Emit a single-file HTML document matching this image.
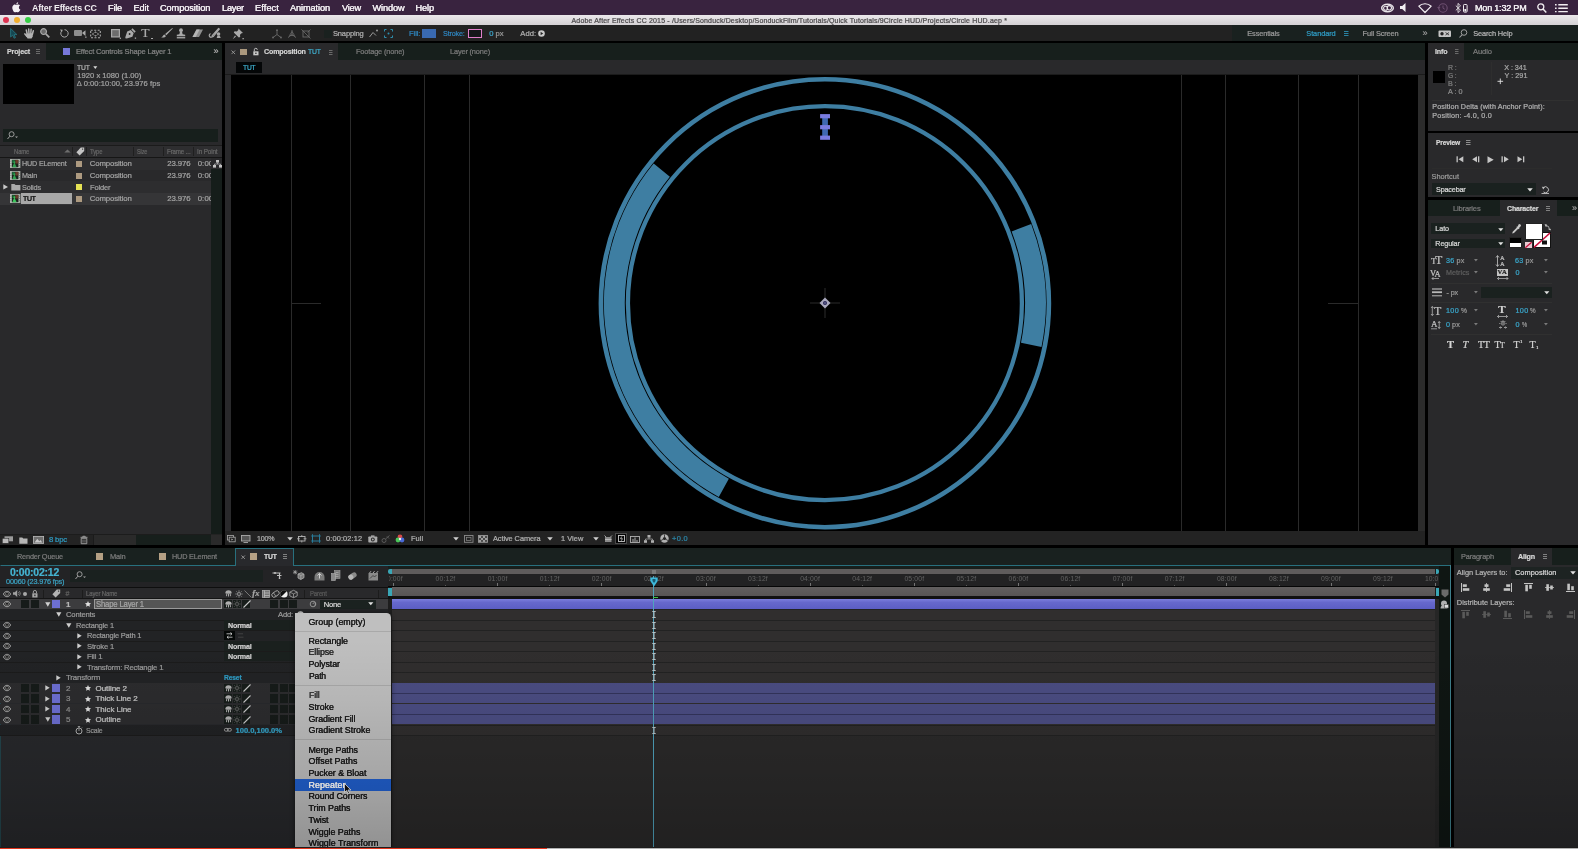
<!DOCTYPE html>
<html>
<head>
<meta charset="utf-8">
<title>After Effects</title>
<style>
html,body{margin:0;padding:0;}
body{width:1578px;height:849px;position:relative;overflow:hidden;background:#000;font-family:"Liberation Sans",sans-serif;font-size:8px;color:#a8a8a8;}
.a{position:absolute;}
.t{position:absolute;white-space:nowrap;line-height:10px;height:10px;-webkit-text-stroke:0.22px;}
svg{position:absolute;overflow:visible;}
#w{position:absolute;left:0;top:0;width:1578px;height:849px;overflow:hidden;background:#000;will-change:transform;filter:blur(0.45px);}
</style>
</head>
<body>
<div id="w">
<!-- p_top -->
<div class="a" style="left:0px;top:0px;width:1578px;height:14.7px;background:#39233f;"></div>
<svg style="left:12px;top:2px;" width="9" height="11" viewBox="0 0 9 11"><path d="M4.500000 3.200000C3.600000 2.600000 2.600000 2.500000 1.700000 3C0.400000 3.800000 0 5.500000 0.500000 7.300000C0.900000 8.800000 1.900000 10.600000 3 10.600000C3.600000 10.600000 3.900000 10.200000 4.600000 10.200000C5.300000 10.200000 5.500000 10.600000 6.200000 10.600000C7.300000 10.600000 8.200000 9 8.700000 7.800000C7.600000 7.300000 7.100000 6.300000 7.200000 5.300000C7.300000 4.400000 7.800000 3.800000 8.400000 3.400000C7.800000 2.700000 6.900000 2.500000 6.300000 2.600000C5.500000 2.700000 5 3.200000 4.500000 3.200000ZM4.500000 2.600000C4.400000 1.500000 5.200000 0.400000 6.400000 0.200000C6.500000 1.400000 5.700000 2.500000 4.500000 2.600000Z" fill="#f4f0f4" transform="scale(0.96,0.97)"/></svg>
<div class="t" style="left:32.3px;top:3px;font-size:9.4px;letter-spacing:-0.21px;transform:scaleX(0.944);transform-origin:0 50%;color:#f1edf1;font-weight:bold;-webkit-text-stroke:0;">After Effects CC</div>
<div class="t" style="left:108.0px;top:3px;font-size:9.2px;letter-spacing:-0.20px;transform:scaleX(0.999);transform-origin:0 50%;color:#f1edf1;text-shadow:0 0 0.4px #f1edf1;">File</div>
<div class="t" style="left:133.5px;top:3px;font-size:9.2px;letter-spacing:-0.09px;color:#f1edf1;text-shadow:0 0 0.4px #f1edf1;">Edit</div>
<div class="t" style="left:160.0px;top:3px;font-size:9.2px;letter-spacing:-0.06px;color:#f1edf1;text-shadow:0 0 0.4px #f1edf1;">Composition</div>
<div class="t" style="left:222.0px;top:3px;font-size:9.2px;letter-spacing:-0.20px;transform:scaleX(1.000);transform-origin:0 50%;color:#f1edf1;text-shadow:0 0 0.4px #f1edf1;">Layer</div>
<div class="t" style="left:255.0px;top:3px;font-size:9.2px;letter-spacing:0.11px;color:#f1edf1;text-shadow:0 0 0.4px #f1edf1;">Effect</div>
<div class="t" style="left:290.0px;top:3px;font-size:9.2px;letter-spacing:-0.10px;color:#f1edf1;text-shadow:0 0 0.4px #f1edf1;">Animation</div>
<div class="t" style="left:342.0px;top:3px;font-size:9.2px;letter-spacing:-0.19px;color:#f1edf1;text-shadow:0 0 0.4px #f1edf1;">View</div>
<div class="t" style="left:372.5px;top:3px;font-size:9.2px;letter-spacing:-0.12px;color:#f1edf1;text-shadow:0 0 0.4px #f1edf1;">Window</div>
<div class="t" style="left:415.5px;top:3px;font-size:9.2px;letter-spacing:-0.11px;color:#f1edf1;text-shadow:0 0 0.4px #f1edf1;">Help</div>
<div class="t" style="left:1475.0px;top:3px;font-size:9.2px;letter-spacing:-0.20px;transform:scaleX(0.981);transform-origin:0 50%;color:#f1edf1;text-shadow:0 0 0.4px #f1edf1;">Mon 1:32 PM</div>
<svg style="left:1381px;top:3px;" width="13" height="9" viewBox="0 0 13 9"><ellipse cx="6.5" cy="5" rx="5.8" ry="3.8" fill="none" stroke="#e8e4e8" stroke-width="1.5"/><circle cx="4.6" cy="5.2" r="2" fill="none" stroke="#e8e4e8" stroke-width="1.1"/><circle cx="8.3" cy="4.8" r="2.2" fill="none" stroke="#e8e4e8" stroke-width="1.1"/></svg>
<svg style="left:1400px;top:3px;" width="8" height="9" viewBox="0 0 8 9"><path d="M0 3h2.2l3.3-3v9l-3.3-3h-2.200000z" fill="#f1edf1"/></svg>
<svg style="left:1418px;top:3px;" width="14" height="10" viewBox="0 0 14 10"><path d="M0.800000 3.2c3.5-3.3 8.9-3.300000 12.400000 0l-6.200000 6.300000z" fill="none" stroke="#f1edf1" stroke-width="1.2" stroke-linejoin="round"/></svg>
<svg style="left:1437px;top:2.5px;" width="11" height="10" viewBox="0 0 11 10"><circle cx="6" cy="5" r="4.2" fill="none" stroke="#6d4f70" stroke-width="1.1"/><path d="M6 2.5v2.700000l1.800000 1" fill="none" stroke="#6d4f70" stroke-width="1"/><path d="M0 4l1.800000 2 1.700000-2z" fill="#6d4f70"/></svg>
<svg style="left:1455px;top:2.5px;" width="7" height="10" viewBox="0 0 7 10"><path d="M0.800000 2.600000l4.700000 4.600000-2.500000 2.400000v-9.200000l2.500000 2.400000-4.700000 4.600000" fill="none" stroke="#e8e4e8" stroke-width="0.9"/></svg>
<svg style="left:1463px;top:3.5px;" width="5" height="9" viewBox="0 0 5 9"><rect x="0.5" y="0.5" width="3.6" height="7.6" rx="0.8" fill="none" stroke="#f1edf1" stroke-width="1"/><rect x="1.4" y="5" width="1.8" height="2.4" fill="#f1edf1"/></svg>
<svg style="left:1537px;top:2.5px;" width="10" height="10" viewBox="0 0 10 10"><circle cx="3.8" cy="3.8" r="3" fill="none" stroke="#f1edf1" stroke-width="1.3"/><path d="M6 6l3.300000 3.400000" stroke="#f1edf1" stroke-width="1.500000"/></svg>
<svg style="left:1554.5px;top:3.5px;" width="13" height="9" viewBox="0 0 13 9"><path d="M0 0.800000h1.600000M3.300000 0.800000h9.500000M0 4.200000h1.600000M3.300000 4.200000h9.500000M0 7.600000h1.600000M3.300000 7.600000h9.500000" stroke="#f1edf1" stroke-width="1.400000"/></svg>
<div class="a" style="left:0px;top:14.7px;width:1578px;height:10.4px;background:linear-gradient(#ebe8eb,#d4d1d4);"></div>
<div class="a" style="left:2.8px;top:16.8px;width:6.4px;height:6.4px;background:#dd3350;border-radius:50%;"></div>
<div class="a" style="left:13.8px;top:16.8px;width:6.4px;height:6.4px;background:#f1ae2e;border-radius:50%;"></div>
<div class="a" style="left:24.8px;top:16.8px;width:6.4px;height:6.4px;background:#36cf45;border-radius:50%;"></div>
<div class="t" style="left:571.5px;top:16px;font-size:7px;letter-spacing:0.16px;color:#4a484a;">Adobe After Effects CC 2015 - /Users/Sonduck/Desktop/SonduckFilm/Tutorials/Quick Tutorials/9Circle HUD/Projects/Circle HUD.aep *</div>
<div class="a" style="left:0px;top:25px;width:1578px;height:15.6px;background:#222222;"></div>
<div class="a" style="left:1232px;top:25px;width:346px;height:15.6px;background:#19211f;"></div>
<svg style="left:10px;top:27.5px;" width="8" height="11" viewBox="0 0 8 11"><path d="M0.600000 0.400000v8.600000l2.100000-1.900000 1.400000 3.100000 1.400000-0.600000-1.400000-3h2.800000z" fill="#154650" stroke="#297884" stroke-width="0.8" stroke-linejoin="round"/></svg>
<svg style="left:24px;top:27.5px;" width="11" height="11" viewBox="0 0 11 11"><path d="M2.300000 5.500000L8.900000 5.300000L8.700000 8.500000L7.600000 10.500000L3.600000 10.500000L2 8Z" fill="#b4b4b4"/><path d="M3.200000 6L2.300000 2M5 5.500000L4.700000 0.900000M6.800000 5.500000L7.100000 1.300000M8.400000 6.200000L9.300000 2.800000M2.800000 8.200000L0.900000 5.900000" stroke="#b4b4b4" stroke-width="1.5" stroke-linecap="round"/></svg>
<svg style="left:40px;top:28px;" width="10" height="10" viewBox="0 0 10 10"><circle cx="3.600000" cy="3.600000" r="2.900000" fill="#6a6a6a" stroke="#a9a9a9" stroke-width="1.200000"/><path d="M5.800000 5.800000l3.500000 3.600000" stroke="#a9a9a9" stroke-width="1.700000"/></svg>
<svg style="left:60px;top:28.5px;" width="9" height="9" viewBox="0 0 9 9"><path d="M1.500000 2.200000a3.700000 3.700000 0 1 0 3-1.500000" fill="none" stroke="#a9a9a9" stroke-width="1"/><path d="M0 0.500000l2.700000 0.200000-0.800000 2.500000z" fill="#a9a9a9"/></svg>
<svg style="left:74px;top:29px;" width="13" height="9" viewBox="0 0 13 9"><rect x="0" y="1" width="8" height="6" rx="1" fill="#8d8d8d"/><path d="M8 4l3.500000-2.800000v5.800000z" fill="#a9a9a9"/><rect x="11.2" y="7.5" width="1.3" height="1.300000" fill="#a9a9a9"/></svg>
<svg style="left:90px;top:28.5px;" width="11" height="10" viewBox="0 0 11 10"><rect x="0.700000" y="1.200000" width="9.600000" height="7.600000" fill="none" stroke="#a9a9a9" stroke-width="1.100000" stroke-dasharray="2 1.500000"/><path d="M5.500000 2.200000l1.500000 1.500000h-3zM5.500000 7.800000l1.500000-1.500000h-3zM2 5l1.500000-1.500000v3zM9 5l-1.500000-1.500000v3z" fill="#a9a9a9"/></svg>
<svg style="left:111px;top:28.5px;" width="10" height="10" viewBox="0 0 10 10"><rect x="0.600000" y="0.600000" width="7.800000" height="7.300000" fill="#6d6d6d" stroke="#a9a9a9" stroke-width="1.200000"/><rect x="8.700000" y="8.600000" width="1.300000" height="1.300000" fill="#a9a9a9"/></svg>
<svg style="left:124px;top:27.5px;" width="13" height="11" viewBox="0 0 13 11"><path d="M8.500000 0.300000l3.200000 3.200000-1.200000 1.200000-3.200000-3.200000zM6.700000 2l3 3-1.300000 3.700000-5.600000 1.800000-1.500000-0.300000 0.100000-1.200000 1.800000-5.500000z" fill="#a9a9a9"/><circle cx="5.600000" cy="6" r="0.900000" fill="#222"/><rect x="10.800000" y="9.500000" width="1.300000" height="1.300000" fill="#a9a9a9"/></svg>
<div class="t" style="left:141.3px;top:28px;font-size:13.5px;color:#a9a9a9;font-family:'Liberation Serif',serif;">T</div>
<div class="a" style="left:151.3px;top:38px;width:1.3px;height:1.3px;background:#a9a9a9;"></div>
<svg style="left:161px;top:28px;" width="12" height="10" viewBox="0 0 12 10"><path d="M11.300000 0l0.500000 0.500000-6.500000 6.800000-1.200000-1.200000zM3.500000 6.500000l1.400000 1.400000c-0.500000 1.500000-2.500000 1.800000-4.700000 1.500000 1.800000-0.600000 1.600000-2.400000 3.300000-2.900000z" fill="#a9a9a9"/></svg>
<svg style="left:176px;top:27.5px;" width="10" height="11" viewBox="0 0 10 11"><circle cx="5" cy="2.200000" r="1.900000" fill="#a9a9a9"/><path d="M4 3.500000L6 3.500000L6.600000 6.200000L9.200000 6.800000L9.200000 8.300000L0.800000 8.300000L0.800000 6.800000L3.400000 6.200000Z" fill="#a9a9a9"/><rect x="0.800000" y="9.100000" width="8.400000" height="1.300000" fill="#a9a9a9"/></svg>
<svg style="left:192px;top:28.5px;" width="12" height="9" viewBox="0 0 12 9"><path d="M4.500000 0.500000h6.500000l-4 7.500000h-6.500000z" fill="#8d8d8d"/><path d="M4.500000 0.500000l-4 7.500000h3.200000l4-7.500000z" fill="#b5b5b5"/></svg>
<svg style="left:209px;top:27.5px;" width="14" height="11" viewBox="0 0 14 11"><path d="M9.500000 0.500000l0.800000 0.600000-6 7.500000-1.500000 0.500000 0.500000-1.600000zM1.500000 5.500000c-1.800000 1-1.800000 3.300000 0.500000 3.800000" fill="none" stroke="#a9a9a9" stroke-width="1.200000"/><circle cx="9.500000" cy="6" r="1.800000" fill="#a9a9a9"/><path d="M8.500000 7.500000l-0.800000 2.500000h4l-1-2.500000z" fill="#a9a9a9"/></svg>
<svg style="left:231px;top:27.5px;" width="13" height="12" viewBox="0 0 13 12"><path d="M6.500000 0.500000l4.500000 4.500000-1.500000 0.300000-1.500000 1.500000 0.200000 2.200000-1.400000 0.500000-5-5 0.800000-1.200000 2.200000 0.200000 1.500000-1.500000zM3 7.500000l1 1-3.300000 2.700000z" fill="#a9a9a9" transform="translate(1,0)"/><rect x="11.500000" y="10" width="1.300000" height="1.300000" fill="#a9a9a9"/></svg>
<svg style="left:272px;top:28.5px;" width="10" height="10" viewBox="0 0 10 10"><path d="M5 1v4.500000l-4 3M5 5.500000l4 3" fill="none" stroke="#6b6b6b" stroke-width="0.9"/><circle cx="5" cy="1.200000" r="0.900000" fill="#6b6b6b"/><circle cx="1" cy="8.500000" r="0.900000" fill="#6b6b6b"/><circle cx="9" cy="8.500000" r="0.900000" fill="#6b6b6b"/></svg>
<svg style="left:286.5px;top:28.5px;" width="10" height="10" viewBox="0 0 10 10"><path d="M5 1v4.500000l-4 3M5 5.500000l4 3" fill="none" stroke="#6b6b6b" stroke-width="0.9"/><path d="M2.500000 6.500000l2.500000-4 2.500000 4z" fill="none" stroke="#6b6b6b" stroke-width="0.8"/></svg>
<svg style="left:301px;top:28.5px;" width="10" height="10" viewBox="0 0 10 10"><rect x="2" y="2" width="6" height="6" fill="none" stroke="#6b6b6b" stroke-width="0.9"/><path d="M0.500000 0.500000l9 9M9.500000 0.500000l-3 3" stroke="#6b6b6b" stroke-width="0.8"/></svg>
<div class="a" style="left:323.5px;top:29.5px;width:8px;height:8px;background:#1a211f;"></div>
<div class="t" style="left:333.3px;top:29px;font-size:7.6px;letter-spacing:-0.17px;transform:scaleX(0.991);transform-origin:0 50%;color:#b0b0b0;">Snapping</div>
<svg style="left:368.5px;top:29px;" width="10" height="9" viewBox="0 0 10 9"><path d="M0.500000 8l3.500000-4.500000 3 3" fill="none" stroke="#999" stroke-width="1"/><circle cx="8" cy="1.500000" r="1" fill="#999"/></svg>
<svg style="left:383.5px;top:29px;" width="9" height="9" viewBox="0 0 9 9"><path d="M0.500000 2.500000v-2h2M6.500000 0.500000h2v2M8.500000 6.500000v2h-2M2.500000 8.500000h-2v-2" fill="none" stroke="#2e8fae" stroke-width="1"/><circle cx="4.500000" cy="4.500000" r="1" fill="#2e8fae"/></svg>
<div class="t" style="left:409.0px;top:29px;font-size:7.6px;letter-spacing:-0.10px;color:#2f86c0;">Fill:</div>
<div class="a" style="left:421.5px;top:28.5px;width:14.5px;height:9.5px;background:#3969b0;"></div>
<div class="t" style="left:443.3px;top:29px;font-size:7.6px;letter-spacing:-0.17px;transform:scaleX(0.947);transform-origin:0 50%;color:#2f86c0;">Stroke:</div>
<div class="a" style="left:467.5px;top:28.5px;width:14.5px;height:9.5px;background:#15171a;border:1.600000px solid #e17fcb;box-sizing:border-box;"></div>
<div class="t" style="left:489.3px;top:29px;font-size:7.6px;color:#3fa9cf;">0</div>
<div class="t" style="left:495.5px;top:29px;font-size:7.6px;letter-spacing:-0.01px;color:#9a9a9a;">px</div>
<div class="t" style="left:520.3px;top:29px;font-size:7.6px;letter-spacing:0.09px;color:#b0b0b0;">Add:</div>
<svg style="left:537.5px;top:29.8px;" width="7" height="7" viewBox="0 0 7 7"><circle cx="3.500000" cy="3.500000" r="3.300000" fill="#c9c9c9"/><path d="M2.600000 1.800000l2.600000 1.700000-2.600000 1.700000z" fill="#222"/></svg>
<div class="t" style="left:1247.3px;top:29px;font-size:7.4px;letter-spacing:-0.14px;color:#9b9b9b;">Essentials</div>
<div class="t" style="left:1306.3px;top:29px;font-size:7.4px;letter-spacing:-0.08px;color:#2f9cc4;">Standard</div>
<svg style="left:1344px;top:31px;" width="5" height="5" viewBox="0 0 5 5"><path d="M0 0.500000h4.500000M0 2.500000h4.500000M0 4.500000h4.500000" stroke="#2f9cc4" stroke-width="0.8"/></svg>
<div class="t" style="left:1362.6px;top:29px;font-size:7.4px;letter-spacing:-0.13px;color:#9b9b9b;">Full Screen</div>
<div class="t" style="left:1422.5px;top:28px;font-size:9px;color:#9b9b9b;">»</div>
<svg style="left:1438px;top:29.5px;" width="14" height="8" viewBox="0 0 14 8"><rect x="0.5" y="0.5" width="12.5" height="6.5" rx="1" fill="#c4c4c4"/><circle cx="4" cy="3.800000" r="1.700000" fill="#222"/><path d="M7.500000 2.500000l3.500000 2.500000M11 2.500000l-3.500000 2.500000" stroke="#222" stroke-width="0.8"/></svg>
<svg style="left:1458.5px;top:29px;" width="9" height="9" viewBox="0 0 9 9"><circle cx="5" cy="3.500000" r="2.800000" fill="none" stroke="#a0a0a0" stroke-width="1"/><path d="M3 5.800000l-2.500000 2.700000" stroke="#a0a0a0" stroke-width="1.100000"/></svg>
<div class="t" style="left:1473.3px;top:29px;font-size:7.4px;letter-spacing:-0.14px;color:#b5b5b5;">Search Help</div>
<div class="a" style="left:0px;top:40.6px;width:1578px;height:2.6px;background:#000;"></div>
<!-- p_project -->
<div class="a" style="left:0px;top:43px;width:222px;height:502px;background:#29292b;"></div>
<div class="a" style="left:46px;top:43px;width:176px;height:17px;background:#171f1c;"></div>
<div class="t" style="left:6.8px;top:47px;font-size:7.8px;letter-spacing:-0.17px;transform:scaleX(0.907);transform-origin:0 50%;color:#d4d4d4;font-weight:bold;">Project</div>
<svg style="left:36px;top:49px;" width="5" height="6" viewBox="0 0 5 6"><path d="M0 0.500000h4M0 2.500000h4M0 4.500000h4" stroke="#6a6a6a" stroke-width="1"/></svg>
<div class="a" style="left:63px;top:48.3px;width:6.7px;height:6.3px;background:#7678d9;"></div>
<div class="t" style="left:75.7px;top:47px;font-size:7.6px;letter-spacing:-0.17px;transform:scaleX(0.991);transform-origin:0 50%;color:#858585;">Effect Controls Shape Layer 1</div>
<div class="t" style="left:213.5px;top:46px;font-size:9px;color:#b0b0b0;">»</div>
<div class="a" style="left:3px;top:64px;width:71px;height:40px;background:#000;"></div>
<div class="t" style="left:77.3px;top:63px;font-size:7.6px;letter-spacing:-0.17px;transform:scaleX(0.890);transform-origin:0 50%;color:#b4b4b4;">TUT</div>
<svg style="left:93px;top:65.8px;" width="5" height="4" viewBox="0 0 5 4"><path d="M0.300000 0.300000h4l-2 2.800000z" fill="#d8d8d8"/></svg>
<div class="t" style="left:77.3px;top:71px;font-size:7.6px;letter-spacing:0.02px;color:#a2a2a2;">1920 x 1080 (1.00)</div>
<div class="t" style="left:76.8px;top:79px;font-size:7.6px;letter-spacing:0.05px;color:#a2a2a2;">Δ 0:00:10:00, 23.976 fps</div>
<div class="a" style="left:3px;top:129px;width:215px;height:12.5px;background:#171f1c;"></div>
<svg style="left:6.5px;top:131px;" width="12" height="9" viewBox="0 0 12 9"><circle cx="4.600000" cy="3.200000" r="2.500000" fill="none" stroke="#a5a5a5" stroke-width="0.9"/><path d="M2.900000 5.200000l-2.400000 2.800000" stroke="#a5a5a5" stroke-width="1"/><path d="M8 5.500000h3l-1.500000 1.600000z" fill="#a5a5a5"/></svg>
<div class="a" style="left:0px;top:146px;width:222px;height:11px;background:#2e2e30;"></div>
<div class="a" style="left:0px;top:145px;width:222px;height:1px;background:#1b1b1b;"></div>
<div class="a" style="left:0px;top:157px;width:222px;height:1px;background:#161616;"></div>
<div class="a" style="left:72px;top:147px;width:1px;height:9px;background:#1f1f1f;"></div>
<div class="a" style="left:86px;top:147px;width:1px;height:9px;background:#1f1f1f;"></div>
<div class="a" style="left:133px;top:147px;width:1px;height:9px;background:#1f1f1f;"></div>
<div class="a" style="left:163px;top:147px;width:1px;height:9px;background:#1f1f1f;"></div>
<div class="a" style="left:193px;top:147px;width:1px;height:9px;background:#1f1f1f;"></div>
<div class="t" style="left:13.5px;top:147px;font-size:6.8px;letter-spacing:-0.15px;transform:scaleX(0.867);transform-origin:0 50%;color:#676767;">Name</div>
<svg style="left:63.5px;top:149px;" width="7" height="4" viewBox="0 0 7 4"><path d="M0.300000 3.500000l3.200000-3 3.200000 3z" fill="#6e6e6e"/></svg>
<svg style="left:75.5px;top:147.3px;" width="9" height="9" viewBox="0 0 9 9"><path d="M4.800000 0.500000h3.400000v3.400000l-4.600000 4.600000-3.200000-3.200000z" fill="#c4c4c4"/><circle cx="6.600000" cy="2.100000" r="0.700000" fill="#2b2b2b"/></svg>
<div class="t" style="left:89.7px;top:147px;font-size:6.8px;letter-spacing:-0.15px;transform:scaleX(0.870);transform-origin:0 50%;color:#676767;">Type</div>
<div class="t" style="left:136.7px;top:147px;font-size:6.8px;letter-spacing:-0.15px;transform:scaleX(0.816);transform-origin:0 50%;color:#676767;">Size</div>
<div class="t" style="left:166.5px;top:147px;font-size:6.8px;letter-spacing:-0.15px;transform:scaleX(0.909);transform-origin:0 50%;color:#676767;">Frame ...</div>
<div class="t" style="left:197.0px;top:147px;font-size:6.8px;letter-spacing:-0.15px;transform:scaleX(0.938);transform-origin:0 50%;color:#676767;">In Point</div>
<div class="a" style="left:0px;top:158.0px;width:211px;height:11.7px;background:#2d2d2f;"></div>
<svg style="left:10px;top:159.3px;" width="10.3" height="9" viewBox="0 0 10.3 9"><rect x="0" y="0" width="10.300000" height="9" fill="#c4ccc4"/><rect x="1.800000" y="0.700000" width="6.700000" height="7.600000" fill="#1c241e"/><rect x="5.300000" y="0.900000" width="3" height="3.600000" fill="#6b3b2b"/><path d="M2.300000 8.200000L4.300000 3.200000L6.600000 8.200000Z" fill="#2fa04e"/><rect x="2.200000" y="1" width="2.600000" height="3" fill="#1d6a3a"/><circle cx="4.400000" cy="3.300000" r="1" fill="#2fa04e"/><path d="M0.900000 0.500000v8M9.400000 0.500000v8" stroke="#4a524a" stroke-width="0.700000" stroke-dasharray="0.900000 0.900000"/></svg>
<div class="t" style="left:22.0px;top:159px;font-size:7.8px;letter-spacing:-0.17px;transform:scaleX(0.919);transform-origin:0 50%;color:#a3a3a3;">HUD ELement</div>
<div class="a" style="left:76px;top:160.8px;width:6.2px;height:6.2px;background:#ad9a80;"></div>
<div class="t" style="left:89.7px;top:159px;font-size:7.8px;letter-spacing:-0.12px;color:#a3a3a3;">Composition</div>
<div class="t" style="left:167.3px;top:159px;font-size:7.8px;letter-spacing:-0.13px;color:#a3a3a3;">23.976</div>
<div class="a" style="left:197.5px;top:158.9px;width:13.3px;height:10px;overflow:hidden;"><div class="t" style="left:0.2px;top:0;font-size:7.8px;letter-spacing:0.100000px;color:#a3a3a3;">0:00</div></div>
<div class="a" style="left:0px;top:169.7px;width:211px;height:11.7px;background:#29292b;"></div>
<svg style="left:10px;top:171.0px;" width="10.3" height="9" viewBox="0 0 10.3 9"><rect x="0" y="0" width="10.300000" height="9" fill="#c4ccc4"/><rect x="1.800000" y="0.700000" width="6.700000" height="7.600000" fill="#1c241e"/><rect x="5.300000" y="0.900000" width="3" height="3.600000" fill="#6b3b2b"/><path d="M2.300000 8.200000L4.300000 3.200000L6.600000 8.200000Z" fill="#2fa04e"/><rect x="2.200000" y="1" width="2.600000" height="3" fill="#1d6a3a"/><circle cx="4.400000" cy="3.300000" r="1" fill="#2fa04e"/><path d="M0.900000 0.500000v8M9.400000 0.500000v8" stroke="#4a524a" stroke-width="0.700000" stroke-dasharray="0.900000 0.900000"/></svg>
<div class="t" style="left:22.0px;top:171px;font-size:7.8px;letter-spacing:-0.17px;transform:scaleX(0.925);transform-origin:0 50%;color:#a3a3a3;">Main</div>
<div class="a" style="left:76px;top:172.5px;width:6.2px;height:6.2px;background:#ad9a80;"></div>
<div class="t" style="left:89.7px;top:171px;font-size:7.8px;letter-spacing:-0.12px;color:#a3a3a3;">Composition</div>
<div class="t" style="left:167.3px;top:171px;font-size:7.8px;letter-spacing:-0.13px;color:#a3a3a3;">23.976</div>
<div class="a" style="left:197.5px;top:170.6px;width:13.3px;height:10px;overflow:hidden;"><div class="t" style="left:0.2px;top:0;font-size:7.8px;letter-spacing:0.100000px;color:#a3a3a3;">0:00</div></div>
<div class="a" style="left:0px;top:181.4px;width:211px;height:11.7px;background:#2d2d2f;"></div>
<svg style="left:3px;top:184.3px;" width="6" height="6" viewBox="0 0 6 6"><path d="M0.300000 0.300000l4.700000 2.600000-4.700000 2.600000z" fill="#c8c8c8"/></svg>
<svg style="left:10.5px;top:183.3px;" width="10" height="8" viewBox="0 0 10 8"><path d="M0.300000 1h3.200000l1 1h4.900000v5.600000h-9.100000z" fill="#a9a9a9"/></svg>
<div class="t" style="left:22.0px;top:183px;font-size:7.8px;letter-spacing:-0.17px;transform:scaleX(0.940);transform-origin:0 50%;color:#a3a3a3;">Solids</div>
<div class="a" style="left:76px;top:184.2px;width:6.2px;height:6.2px;background:#e5e254;"></div>
<div class="t" style="left:89.7px;top:183px;font-size:7.8px;letter-spacing:-0.17px;transform:scaleX(0.963);transform-origin:0 50%;color:#a3a3a3;">Folder</div>
<div class="a" style="left:0px;top:193.1px;width:211px;height:11.7px;background:#353537;"></div>
<div class="a" style="left:20.5px;top:193.2px;width:51.5px;height:11px;background:#a8a8a8;"></div>
<svg style="left:10px;top:194.4px;" width="10.3" height="9" viewBox="0 0 10.3 9"><rect x="0" y="0" width="10.300000" height="9" fill="#c4ccc4"/><rect x="1.800000" y="0.700000" width="6.700000" height="7.600000" fill="#1c241e"/><rect x="5.300000" y="0.900000" width="3" height="3.600000" fill="#6b3b2b"/><path d="M2.300000 8.200000L4.300000 3.200000L6.600000 8.200000Z" fill="#3cc85c"/><rect x="2.200000" y="1" width="2.600000" height="3" fill="#1a5a2c"/><circle cx="4.400000" cy="3.300000" r="1" fill="#3cc85c"/><path d="M0.900000 0.500000v8M9.400000 0.500000v8" stroke="#4a524a" stroke-width="0.700000" stroke-dasharray="0.900000 0.900000"/></svg>
<div class="t" style="left:22.6px;top:194px;font-size:7.8px;letter-spacing:-0.17px;transform:scaleX(0.881);transform-origin:0 50%;color:#181818;text-shadow:0 0 0.300000px currentColor;">TUT</div>
<div class="a" style="left:76px;top:195.9px;width:6.2px;height:6.2px;background:#ad9a80;"></div>
<div class="t" style="left:89.7px;top:194px;font-size:7.8px;letter-spacing:-0.12px;color:#a3a3a3;">Composition</div>
<div class="t" style="left:167.3px;top:194px;font-size:7.8px;letter-spacing:-0.13px;color:#a3a3a3;">23.976</div>
<div class="a" style="left:197.5px;top:194.0px;width:13.3px;height:10px;overflow:hidden;"><div class="t" style="left:0.2px;top:0;font-size:7.8px;letter-spacing:0.100000px;color:#a3a3a3;">0:00</div></div>
<svg style="left:212.5px;top:159.5px;" width="9" height="8" viewBox="0 0 9 8"><rect x="3" y="0" width="3" height="2.600000" fill="#c2c2c2"/><rect x="0" y="5" width="3" height="2.600000" fill="#c2c2c2"/><rect x="6" y="5" width="3" height="2.600000" fill="#c2c2c2"/><path d="M4.500000 2.500000v1.500000M1.500000 5v-1h6v1" fill="none" stroke="#c2c2c2" stroke-width="0.7"/></svg>
<div class="a" style="left:211px;top:169px;width:10.5px;height:365px;background:#151d1a;"></div>
<div class="a" style="left:0px;top:534px;width:222px;height:11px;background:#232323;"></div>
<div class="a" style="left:0px;top:533.5px;width:211px;height:0.8px;background:#1c1c1c;"></div>
<svg style="left:2px;top:536px;" width="12" height="8" viewBox="0 0 12 8"><rect x="2.500000" y="0.300000" width="8.500000" height="5" fill="#9a9a9a"/><rect x="0.300000" y="2.300000" width="6.500000" height="5" fill="#b9b9b9" stroke="#232323" stroke-width="0.5"/></svg>
<svg style="left:19px;top:536.5px;" width="9" height="7" viewBox="0 0 9 7"><path d="M0.300000 0.500000h3l0.900000 1h4.300000v5.200000h-8.200000z" fill="#b5b5b5"/></svg>
<svg style="left:33px;top:536px;" width="11" height="8" viewBox="0 0 11 8"><rect x="0.400000" y="0.400000" width="10.200000" height="7" fill="#6e6e6e" stroke="#b9b9b9" stroke-width="0.8"/><path d="M1.500000 6.500000l2.800000-3.800000 2 2.500000 1.200000-1.200000 1.800000 2.500000z" fill="#c9c9c9"/></svg>
<div class="t" style="left:48.5px;top:535px;font-size:7.8px;letter-spacing:-0.17px;transform:scaleX(0.988);transform-origin:0 50%;color:#2f9cc4;">8 bpc</div>
<svg style="left:80px;top:536px;" width="8" height="8" viewBox="0 0 8 8"><path d="M1.200000 2.300000h5.600000v5.400000h-5.600000zM0.500000 1.300000h7M2.800000 1.300000v-1h2.400000v1" fill="none" stroke="#a5a5a5" stroke-width="0.9"/><path d="M3 3.500000v3.200000M5 3.500000v3.200000" stroke="#a5a5a5" stroke-width="0.7"/></svg>
<div class="a" style="left:92.5px;top:535px;width:1px;height:10px;background:#1b1b1b;"></div>
<div class="a" style="left:93.5px;top:535px;width:42.5px;height:10px;background:#2a2a2a;"></div>
<div class="a" style="left:136px;top:535px;width:75px;height:10px;background:#171f1c;"></div>
<div class="a" style="left:211px;top:535px;width:11px;height:10px;background:#2a2a2a;"></div>
<!-- p_comp -->
<div class="a" style="left:225px;top:43px;width:1200px;height:502px;background:#29292b;"></div>
<div class="a" style="left:338px;top:43px;width:1087px;height:17px;background:#171f1c;"></div>
<svg style="left:231px;top:49.5px;" width="5" height="5" viewBox="0 0 5 5"><path d="M0.500000 0.500000l3.600000 3.600000M4.100000 0.500000l-3.600000 3.600000" stroke="#9a9a9a" stroke-width="0.9"/></svg>
<div class="a" style="left:240px;top:48.5px;width:7px;height:6.5px;background:#ab987e;"></div>
<svg style="left:252.5px;top:47.8px;" width="6" height="8" viewBox="0 0 6 8"><rect x="0.300000" y="3.300000" width="5.200000" height="4" fill="#c9c9c9"/><path d="M1.300000 3.300000v-1.500000a1.500000 1.500000 0 0 1 3 0" fill="none" stroke="#c9c9c9" stroke-width="0.9"/><rect x="2.300000" y="4.600000" width="1.200000" height="1.400000" fill="#262626"/></svg>
<div class="t" style="left:264.0px;top:47px;font-size:7.8px;letter-spacing:-0.17px;transform:scaleX(0.913);transform-origin:0 50%;color:#d4d4d4;font-weight:bold;">Composition</div>
<div class="t" style="left:307.5px;top:47px;font-size:7.8px;letter-spacing:-0.17px;transform:scaleX(0.874);transform-origin:0 50%;color:#3fb2d3;">TUT</div>
<svg style="left:329px;top:49.5px;" width="4" height="6" viewBox="0 0 4 6"><path d="M0 0.500000h3.500000M0 2.500000h3.500000M0 4.500000h3.500000" stroke="#6a6a6a" stroke-width="1"/></svg>
<div class="t" style="left:355.5px;top:47px;font-size:7.6px;letter-spacing:-0.17px;transform:scaleX(0.977);transform-origin:0 50%;color:#7c7c7c;">Footage (none)</div>
<div class="t" style="left:450.0px;top:47px;font-size:7.6px;letter-spacing:-0.17px;transform:scaleX(0.974);transform-origin:0 50%;color:#7c7c7c;">Layer (none)</div>
<div class="a" style="left:236px;top:62.4px;width:25.6px;height:10.2px;background:#040607;"></div>
<div class="t" style="left:242.5px;top:63px;font-size:7.6px;letter-spacing:-0.17px;transform:scaleX(0.876);transform-origin:0 50%;color:#3fb2d3;">TUT</div>
<div class="a" style="left:225px;top:74px;width:1200px;height:1px;background:#1b1b1b;"></div>
<div class="a" style="left:231px;top:75px;width:1187px;height:455.7px;background:#000;"></div>
<div class="a" style="left:1418px;top:75px;width:7px;height:456px;background:#2b2b2b;"></div>
<div class="a" style="left:291px;top:75px;width:1px;height:455.7px;background:#2a2a2a;"></div>
<div class="a" style="left:350.2px;top:75px;width:1px;height:455.7px;background:#2a2a2a;"></div>
<div class="a" style="left:424.3px;top:75px;width:1px;height:455.7px;background:#2a2a2a;"></div>
<div class="a" style="left:469px;top:75px;width:1px;height:455.7px;background:#2a2a2a;"></div>
<div class="a" style="left:1180.6px;top:75px;width:1px;height:455.7px;background:#2a2a2a;"></div>
<div class="a" style="left:1225.3px;top:75px;width:1px;height:455.7px;background:#2a2a2a;"></div>
<div class="a" style="left:1298.3px;top:75px;width:1px;height:455.7px;background:#2a2a2a;"></div>
<div class="a" style="left:1358.2px;top:75px;width:1px;height:455.7px;background:#2a2a2a;"></div>
<div class="a" style="left:291px;top:302.6px;width:30px;height:1px;background:#2a2a2a;"></div>
<div class="a" style="left:1328px;top:302.6px;width:31px;height:1px;background:#2a2a2a;"></div>
<svg style="left:231px;top:75px;" width="1187" height="456" viewBox="0 0 1187 456"><circle cx="593.9" cy="228.2" r="224" fill="none" stroke="#3e7ea2" stroke-width="4.6"/><circle cx="593.9" cy="228.2" r="197" fill="none" stroke="#3e7ea2" stroke-width="4.3"/><path d="M430.77 95.16A210.5 210.5 0 0 0 492.81 412.84" fill="none" stroke="#3e7ea2" stroke-width="20.9"/><path d="M790.42 152.76A210.5 210.5 0 0 1 800.25 269.81" fill="none" stroke="#3e7ea2" stroke-width="20.9"/><path d="M579 228h30M594 213v30" stroke="#1c1c1c" stroke-width="1.6"/><path d="M588.5 228l5.500000-5.500000 5.500000 5.500000-5.500000 5.500000z" fill="#a9a8bd"/><circle cx="594" cy="228" r="2" fill="#2a2858"/><circle cx="594" cy="228" r="0.700000" fill="#9a98c8"/><rect x="591.2" y="41" width="5.700000" height="22" fill="#3f68b0"/><rect x="589.1" y="39.099999999999994" width="9.900000" height="4.200000" fill="#7a7ce0"/><rect x="589.1" y="50.099999999999994" width="9.900000" height="4.200000" fill="#7a7ce0"/><rect x="589.1" y="60.599999999999994" width="9.900000" height="4.200000" fill="#7a7ce0"/></svg>
<div class="a" style="left:225px;top:530.7px;width:1200px;height:14.3px;background:#232323;"></div>
<svg style="left:227px;top:534.5px;" width="9" height="8" viewBox="0 0 9 8"><rect x="0.400000" y="0.400000" width="6" height="4.600000" fill="none" stroke="#a9a9a9" stroke-width="0.8"/><rect x="2.200000" y="2.200000" width="6" height="4.600000" fill="#232323" stroke="#a9a9a9" stroke-width="0.8"/><path d="M4.300000 3.500000l2 1-2 1z" fill="#a9a9a9"/></svg>
<svg style="left:241px;top:534.5px;" width="10" height="8" viewBox="0 0 10 8"><rect x="0.500000" y="0.500000" width="8.500000" height="5.500000" fill="#555" stroke="#a9a9a9" stroke-width="0.9"/><path d="M2.500000 7.500000h4.500000" stroke="#a9a9a9" stroke-width="0.9"/></svg>
<div class="t" style="left:257.0px;top:534px;font-size:7.4px;letter-spacing:-0.16px;transform:scaleX(0.958);transform-origin:0 50%;color:#b0b0b0;">100%</div>
<svg style="left:286.5px;top:536.5px;" width="6" height="4" viewBox="0 0 6 4"><path d="M0.200000 0.300000h5.600000l-2.800000 3.300000z" fill="#d0d0d0"/></svg>
<svg style="left:297px;top:534.5px;" width="10" height="8" viewBox="0 0 10 8"><rect x="1.500000" y="1.500000" width="6.500000" height="4.500000" fill="none" stroke="#b5b5b5" stroke-width="0.9"/><path d="M0 3.800000h3M6.500000 3.800000h3M4.800000 0v2M4.800000 5.500000v2" stroke="#b5b5b5" stroke-width="0.8"/></svg>
<svg style="left:311px;top:534px;" width="10" height="9" viewBox="0 0 10 9"><rect x="1.500000" y="2" width="7" height="5" fill="none" stroke="#2a86a8" stroke-width="0.9"/><path d="M1.500000 0v2h-1.500000M8.500000 0v2h1.500000M1.500000 9v-2h-1.500000M8.500000 9v-2h1.500000" fill="none" stroke="#2a86a8" stroke-width="0.7"/></svg>
<div class="t" style="left:326.0px;top:534px;font-size:7.4px;letter-spacing:0.13px;color:#b0b0b0;">0:00:02:12</div>
<svg style="left:368px;top:534.5px;" width="10" height="8" viewBox="0 0 10 8"><rect x="0.300000" y="1.500000" width="9" height="6" rx="0.800000" fill="#a9a9a9"/><rect x="3" y="0.400000" width="3.500000" height="1.500000" fill="#a9a9a9"/><circle cx="4.800000" cy="4.500000" r="1.900000" fill="#232323"/><circle cx="4.800000" cy="4.500000" r="1" fill="#a9a9a9"/></svg>
<svg style="left:381px;top:534.5px;" width="10" height="8" viewBox="0 0 10 8"><circle cx="3" cy="5.500000" r="2" fill="none" stroke="#5a5a5a" stroke-width="1"/><path d="M4.500000 4l4-3.500000M6 1.500000l2 2" stroke="#5a5a5a" stroke-width="1"/></svg>
<svg style="left:395px;top:534px;" width="10" height="9" viewBox="0 0 10 9"><circle cx="5" cy="3" r="2.400000" fill="#d84a4a"/><circle cx="3" cy="6" r="2.400000" fill="#4ac85a"/><circle cx="7" cy="6" r="2.400000" fill="#4a6ad8"/><circle cx="5" cy="5" r="1.200000" fill="#eee"/></svg>
<div class="t" style="left:411.0px;top:534px;font-size:7.4px;letter-spacing:0.09px;color:#b0b0b0;">Full</div>
<svg style="left:453px;top:536.5px;" width="6" height="4" viewBox="0 0 6 4"><path d="M0.200000 0.300000h5.600000l-2.800000 3.300000z" fill="#d0d0d0"/></svg>
<svg style="left:463.5px;top:534.5px;" width="10" height="8" viewBox="0 0 10 8"><rect x="0.500000" y="0.500000" width="8.500000" height="6.800000" fill="none" stroke="#8a8a8a" stroke-width="0.9"/><rect x="2.500000" y="2.300000" width="4.500000" height="3.200000" fill="none" stroke="#8a8a8a" stroke-width="0.7"/></svg>
<svg style="left:477.5px;top:534.5px;" width="10" height="8" viewBox="0 0 10 8"><rect x="0.500000" y="0.500000" width="9" height="6.800000" fill="#4a4a4a" stroke="#9a9a9a" stroke-width="0.9"/><path d="M1 1h2v2h-2zM5 1h2v2h-2zM3 3h2v2h-2zM7 3h2v2h-2zM1 5h2v2h-2zM5 5h2v2h-2z" fill="#9e9e9e"/></svg>
<div class="t" style="left:493.0px;top:534px;font-size:7.4px;letter-spacing:-0.08px;color:#b0b0b0;">Active Camera</div>
<svg style="left:547px;top:536.5px;" width="6" height="4" viewBox="0 0 6 4"><path d="M0.200000 0.300000h5.600000l-2.800000 3.300000z" fill="#d0d0d0"/></svg>
<div class="t" style="left:561.0px;top:534px;font-size:7.4px;letter-spacing:0.04px;color:#b0b0b0;">1 View</div>
<svg style="left:592.5px;top:536.5px;" width="6" height="4" viewBox="0 0 6 4"><path d="M0.200000 0.300000h5.600000l-2.800000 3.300000z" fill="#d0d0d0"/></svg>
<svg style="left:604px;top:534.5px;" width="9" height="8" viewBox="0 0 9 8"><rect x="1" y="2" width="6.500000" height="5" fill="#8a8a8a"/><path d="M0.500000 0.500000l1.500000 1.500000M8 0.500000l-1.500000 1.500000M1 4.500000h6.500000" stroke="#c4c4c4" stroke-width="0.8"/></svg>
<div class="a" style="left:615px;top:533px;width:12px;height:11px;background:#050505;border:1px solid #4a4a4a;box-sizing:border-box;"></div>
<svg style="left:617.5px;top:535px;" width="7" height="7" viewBox="0 0 7 7"><rect x="0.500000" y="0.500000" width="6" height="6" fill="none" stroke="#c9c9c9" stroke-width="0.9"/><path d="M3.800000 1.500000l-1.300000 2.200000h2l-1.200000 2" fill="none" stroke="#c9c9c9" stroke-width="0.8"/></svg>
<svg style="left:630px;top:534.5px;" width="10" height="8" viewBox="0 0 10 8"><rect x="0.500000" y="1.500000" width="9" height="6" fill="none" stroke="#b0b0b0" stroke-width="0.9"/><path d="M3 7v-3M5 7v-4.500000M7 7v-2" stroke="#b0b0b0" stroke-width="1"/></svg>
<svg style="left:643.5px;top:534.5px;" width="10" height="8" viewBox="0 0 10 8"><rect x="3.500000" y="0" width="3" height="2.600000" fill="#b0b0b0"/><rect x="0" y="5.200000" width="3" height="2.600000" fill="#b0b0b0"/><rect x="7" y="5.200000" width="3" height="2.600000" fill="#b0b0b0"/><path d="M5 2.500000v1.500000M1.500000 5.200000v-1.200000h7v1.200000" fill="none" stroke="#b0b0b0" stroke-width="0.7"/></svg>
<svg style="left:659.5px;top:534px;" width="9" height="9" viewBox="0 0 9 9"><circle cx="4.500000" cy="4.500000" r="4.200000" fill="#b0b0b0"/><circle cx="4.500000" cy="4.500000" r="1.600000" fill="#232323"/><path d="M4.500000 0.500000v2.500000M1 6.500000l2.200000-1.200000M8 6.500000l-2.200000-1.200000" stroke="#232323" stroke-width="0.8"/></svg>
<div class="t" style="left:672.0px;top:534px;font-size:7.4px;letter-spacing:0.35px;color:#2b87aa;">+0.0</div>
<!-- p_right -->
<div class="a" style="left:1428px;top:43px;width:150px;height:87.5px;background:#29292b;"></div>
<div class="a" style="left:1464px;top:43px;width:114px;height:17px;background:#171f1c;"></div>
<div class="t" style="left:1435.3px;top:47px;font-size:7.8px;letter-spacing:-0.17px;transform:scaleX(0.919);transform-origin:0 50%;color:#d8d8d8;font-weight:bold;">Info</div>
<svg style="left:1454.5px;top:49px;" width="4" height="6" viewBox="0 0 4 6"><path d="M0 0.500000h3.500000M0 2.500000h3.500000M0 4.500000h3.500000" stroke="#6a6a6a" stroke-width="1"/></svg>
<div class="t" style="left:1473.0px;top:47px;font-size:7.6px;letter-spacing:-0.11px;color:#7c7c7c;">Audio</div>
<div class="a" style="left:1433px;top:71px;width:12px;height:12px;background:#000;"></div>
<div class="t" style="left:1448.0px;top:63px;font-size:7.2px;letter-spacing:-0.16px;transform:scaleX(0.974);transform-origin:0 50%;color:#7e7e7e;">R :</div>
<div class="t" style="left:1448.0px;top:71px;font-size:7.2px;letter-spacing:-0.16px;transform:scaleX(0.931);transform-origin:0 50%;color:#7e7e7e;">G :</div>
<div class="t" style="left:1448.0px;top:79px;font-size:7.2px;letter-spacing:-0.10px;color:#7e7e7e;">B :</div>
<div class="t" style="left:1448.0px;top:87px;font-size:7.2px;letter-spacing:0.01px;color:#8e8e8e;">A :  0</div>
<div class="a" style="left:1490.5px;top:62px;width:1px;height:33px;background:#2e2e2e;"></div>
<div class="t" style="left:1504.3px;top:63px;font-size:7.2px;letter-spacing:-0.06px;color:#a8a8a8;">X : 341</div>
<div class="t" style="left:1504.5px;top:71px;font-size:7.2px;letter-spacing:0.04px;color:#a8a8a8;">Y : 291</div>
<svg style="left:1496.5px;top:77.5px;" width="7" height="7" viewBox="0 0 7 7"><path d="M3.300000 0.500000v5.600000M0.500000 3.300000h5.600000" stroke="#e4e4e4" stroke-width="0.9"/></svg>
<div class="a" style="left:1432px;top:99.5px;width:142px;height:1px;background:#303030;"></div>
<div class="t" style="left:1432.3px;top:102px;font-size:7.2px;letter-spacing:0.11px;color:#b0b0b0;">Position Delta (with Anchor Point):</div>
<div class="t" style="left:1432.3px;top:111px;font-size:7.2px;letter-spacing:0.19px;color:#b0b0b0;">Position: -4.0, 0.0</div>
<div class="a" style="left:1428px;top:133px;width:150px;height:63.5px;background:#29292b;"></div>
<div class="t" style="left:1435.5px;top:138px;font-size:7.6px;letter-spacing:-0.17px;transform:scaleX(0.871);transform-origin:0 50%;color:#d8d8d8;font-weight:bold;">Preview</div>
<svg style="left:1466px;top:139.5px;" width="5" height="6" viewBox="0 0 5 6"><path d="M0 0.500000h4.500000M0 2.500000h4.500000M0 4.500000h4.500000" stroke="#9a9a9a" stroke-width="0.9"/></svg>
<svg style="left:1456px;top:156px;" width="8" height="7" viewBox="0 0 8 7"><rect x="0.500000" y="0.300000" width="1.300000" height="6" fill="#c6c6c6"/><path d="M7.300000 0.300000v6l-4.800000-3z" fill="#c6c6c6"/></svg>
<svg style="left:1471.5px;top:156px;" width="8" height="7" viewBox="0 0 8 7"><path d="M5 0.300000v6l-4.800000-3z" fill="#c6c6c6"/><rect x="6" y="0.300000" width="1.300000" height="6" fill="#c6c6c6"/></svg>
<svg style="left:1487px;top:155.5px;" width="8" height="8" viewBox="0 0 8 8"><path d="M0.500000 0.300000v7l6.200000-3.500000z" fill="#c6c6c6"/></svg>
<svg style="left:1500.5px;top:156px;" width="8" height="7" viewBox="0 0 8 7"><rect x="0.500000" y="0.300000" width="1.300000" height="6" fill="#c6c6c6"/><path d="M3 0.300000v6l4.800000-3z" fill="#c6c6c6"/></svg>
<svg style="left:1516.5px;top:156px;" width="8" height="7" viewBox="0 0 8 7"><path d="M0.500000 0.300000v6l4.800000-3z" fill="#c6c6c6"/><rect x="6" y="0.300000" width="1.300000" height="6" fill="#c6c6c6"/></svg>
<div class="a" style="left:1432px;top:167.5px;width:120px;height:1px;background:#2c2c2c;"></div>
<div class="t" style="left:1431.5px;top:172px;font-size:7.4px;letter-spacing:-0.01px;color:#9a9a9a;">Shortcut</div>
<div class="a" style="left:1432px;top:183.2px;width:104px;height:12.3px;background:#1a211f;"></div>
<div class="t" style="left:1435.7px;top:185px;font-size:7.4px;letter-spacing:-0.16px;transform:scaleX(0.974);transform-origin:0 50%;color:#dcdcdc;">Spacebar</div>
<svg style="left:1527px;top:187.5px;" width="6" height="4" viewBox="0 0 6 4"><path d="M0.200000 0.300000h5.600000l-2.800000 3.300000z" fill="#e0e0e0"/></svg>
<svg style="left:1540.5px;top:185px;" width="9" height="9" viewBox="0 0 9 9"><path d="M2.500000 2.500000a3 3 0 1 1 0 4.500000" fill="none" stroke="#c0c0c0" stroke-width="1"/><path d="M0.800000 1.800000l3 0.200000-1.500000 2.400000z" fill="#c0c0c0"/><path d="M0.500000 8.500000h7.500000" stroke="#c0c0c0" stroke-width="0.9"/></svg>
<div class="a" style="left:1428px;top:199.5px;width:150px;height:345.5px;background:#29292b;"></div>
<div class="a" style="left:1428px;top:199.5px;width:71.5px;height:16.5px;background:#171f1c;"></div>
<div class="a" style="left:1557px;top:199.5px;width:21px;height:16.5px;background:#171f1c;"></div>
<div class="t" style="left:1453.4px;top:204px;font-size:7.6px;letter-spacing:-0.17px;transform:scaleX(0.998);transform-origin:0 50%;color:#7c7c7c;">Libraries</div>
<div class="t" style="left:1506.6px;top:204px;font-size:7.6px;letter-spacing:-0.17px;transform:scaleX(0.921);transform-origin:0 50%;color:#d8d8d8;font-weight:bold;">Character</div>
<svg style="left:1546px;top:206px;" width="5" height="6" viewBox="0 0 5 6"><path d="M0 0.500000h4M0 2.500000h4M0 4.500000h4" stroke="#8a8a8a" stroke-width="0.9"/></svg>
<div class="t" style="left:1572.0px;top:203px;font-size:9px;color:#a0a0a0;">»</div>
<div class="a" style="left:1431.2px;top:223.3px;width:73.8px;height:10.3px;background:#1a211f;"></div>
<div class="t" style="left:1435.3px;top:224px;font-size:7.2px;letter-spacing:-0.08px;color:#d8d8d8;">Lato</div>
<svg style="left:1498px;top:227.5px;" width="6" height="4" viewBox="0 0 6 4"><path d="M0.200000 0.300000h5.200000l-2.600000 3z" fill="#e0e0e0"/></svg>
<div class="a" style="left:1431.2px;top:238.7px;width:73.8px;height:9.6px;background:#1a211f;"></div>
<div class="t" style="left:1435.3px;top:239px;font-size:7.2px;letter-spacing:-0.10px;color:#d8d8d8;">Regular</div>
<svg style="left:1498px;top:242px;" width="6" height="4" viewBox="0 0 6 4"><path d="M0.200000 0.300000h5.200000l-2.600000 3z" fill="#e0e0e0"/></svg>
<svg style="left:1511px;top:224px;" width="10" height="10" viewBox="0 0 10 10"><path d="M7.500000 0.500000a1.400000 1.400000 0 0 1 2 2l-1.500000 1.500000 0.500000 0.500000-0.800000 0.800000-0.500000-0.500000-4.200000 4.200000-1.800000 0.500000 0.500000-1.800000 4.200000-4.200000-0.500000-0.500000 0.800000-0.800000 0.500000 0.500000z" fill="#c9c9c9"/></svg>
<div class="a" style="left:1533px;top:231.8px;width:18px;height:16.3px;background:#fff;border:1px solid #111;box-sizing:border-box;"></div>
<svg style="left:1533px;top:231.8px;" width="18" height="16.3" viewBox="0 0 18 16.3"><path d="M1 15.300000l16-14.300000" stroke="#c8103c" stroke-width="1.6"/><rect x="9" y="8.500000" width="5" height="4" fill="#111"/></svg>
<div class="a" style="left:1525.4px;top:223.3px;width:17.4px;height:17px;background:#fff;border:1px solid #222;box-sizing:border-box;"></div>
<svg style="left:1544.5px;top:223.5px;" width="6" height="6" viewBox="0 0 6 6"><path d="M0.500000 1.500000a4 4 0 0 1 4 4M0 0.500000l2 0.500000-1 1.500000zM5.500000 6l-1.800000-0.800000h1.800000z" fill="none" stroke="#c0c0c0" stroke-width="0.8"/></svg>
<div class="a" style="left:1509px;top:237.4px;width:12.7px;height:10.7px;background:#fff;border:1px solid #222;box-sizing:border-box;"></div>
<div class="a" style="left:1510px;top:238.4px;width:10.7px;height:4.3px;background:#000;"></div>
<div class="a" style="left:1525px;top:242px;width:7px;height:6px;background:#e8c8d0;"></div>
<svg style="left:1525px;top:242px;" width="7" height="6" viewBox="0 0 7 6"><path d="M0.300000 5.700000l6.400000-5.400000" stroke="#c8103c" stroke-width="1.300000"/></svg>
<div class="t" style="left:1431.0px;top:256px;font-size:9px;color:#c4c4c4;font-family:'Liberation Serif',serif;">T</div>
<div class="t" style="left:1435.3px;top:255px;font-size:11.5px;color:#c4c4c4;font-family:'Liberation Serif',serif;">T</div>
<div class="t" style="left:1446.0px;top:256px;font-size:7.2px;letter-spacing:0.25px;color:#3aa7cc;">36</div>
<div class="t" style="left:1456.5px;top:256px;font-size:7.2px;letter-spacing:0.20px;color:#9a9a9a;">px</div>
<svg style="left:1474px;top:259.1px;" width="4" height="3" viewBox="0 0 4 3"><path d="M0 0h3.800000l-1.900000 2.600000z" fill="#7a7a7a"/></svg>
<svg style="left:1496px;top:255px;" width="10" height="12" viewBox="0 0 10 12"><path d="M1.500000 1v10M0 2.500000l1.500000-2 1.500000 2M0 9.500000l1.500000 2 1.500000-2" fill="none" stroke="#c4c4c4" stroke-width="0.8"/></svg>
<div class="t" style="left:1500.0px;top:253px;font-size:6.5px;color:#c4c4c4;font-family:'Liberation Serif',serif;">A</div>
<div class="t" style="left:1500.0px;top:259px;font-size:6.5px;color:#c4c4c4;font-family:'Liberation Serif',serif;">A</div>
<div class="t" style="left:1515.0px;top:256px;font-size:7.2px;letter-spacing:0.25px;color:#3aa7cc;">63</div>
<div class="t" style="left:1525.5px;top:256px;font-size:7.2px;letter-spacing:0.20px;color:#9a9a9a;">px</div>
<svg style="left:1544px;top:259.1px;" width="4" height="3" viewBox="0 0 4 3"><path d="M0 0h3.800000l-1.900000 2.600000z" fill="#7a7a7a"/></svg>
<div class="t" style="left:1430.0px;top:268px;font-size:8.5px;color:#c4c4c4;font-family:'Liberation Serif',serif;">V</div>
<div class="t" style="left:1434.6px;top:269px;font-size:8.5px;color:#c4c4c4;font-family:'Liberation Serif',serif;">A</div>
<svg style="left:1432px;top:277px;" width="8" height="3" viewBox="0 0 8 3"><path d="M0 1.500000h7M1.500000 0l-1.500000 1.500000 1.500000 1.500000" fill="none" stroke="#c4c4c4" stroke-width="0.7"/></svg>
<div class="t" style="left:1446.0px;top:268px;font-size:7.2px;letter-spacing:0.04px;color:#5e5e5e;">Metrics</div>
<svg style="left:1474px;top:271.3px;" width="4" height="3" viewBox="0 0 4 3"><path d="M0 0h3.800000l-1.900000 2.600000z" fill="#7a7a7a"/></svg>
<div class="a" style="left:1496.5px;top:268.6px;width:11.5px;height:7px;background:#c4c4c4;"></div>
<div class="t" style="left:1497.4px;top:267px;font-size:6.6px;letter-spacing:0.66px;color:#222;font-weight:bold;font-family:'Liberation Serif',serif;">VA</div>
<svg style="left:1496.5px;top:276.5px;" width="12" height="3" viewBox="0 0 12 3"><path d="M0.500000 1.500000h10.500000M2 0l-1.500000 1.500000 1.500000 1.500000M9.500000 0l1.500000 1.500000-1.500000 1.500000" fill="none" stroke="#c4c4c4" stroke-width="0.7"/></svg>
<div class="t" style="left:1515.5px;top:268px;font-size:7.2px;color:#3aa7cc;">0</div>
<svg style="left:1544px;top:271.3px;" width="4" height="3" viewBox="0 0 4 3"><path d="M0 0h3.800000l-1.900000 2.600000z" fill="#7a7a7a"/></svg>
<div class="a" style="left:1431px;top:283px;width:121px;height:1px;background:#303030;"></div>
<svg style="left:1431.5px;top:288px;" width="10" height="9" viewBox="0 0 10 9"><path d="M0 1h10" stroke="#b8b8b8" stroke-width="1.2"/><path d="M0 4.200000h10" stroke="#b8b8b8" stroke-width="1.800000"/><path d="M0 7.800000h10" stroke="#b8b8b8" stroke-width="1"/></svg>
<div class="t" style="left:1446.5px;top:288px;font-size:7.2px;letter-spacing:-0.10px;color:#9a9a9a;">-  px</div>
<svg style="left:1474px;top:290.9px;" width="4" height="3" viewBox="0 0 4 3"><path d="M0 0h3.800000l-1.900000 2.600000z" fill="#7a7a7a"/></svg>
<div class="a" style="left:1481px;top:287.3px;width:71px;height:10.4px;background:#1a211f;"></div>
<svg style="left:1543.5px;top:290.5px;" width="6" height="4" viewBox="0 0 6 4"><path d="M0.200000 0.300000h5.200000l-2.600000 3z" fill="#e0e0e0"/></svg>
<div class="a" style="left:1431px;top:302px;width:121px;height:1px;background:#303030;"></div>
<svg style="left:1431px;top:305.5px;" width="3" height="10" viewBox="0 0 3 10"><path d="M1.300000 0.500000v9M0 2l1.300000-1.500000 1.300000 1.500000M0 8l1.300000 1.500000 1.300000-1.500000" fill="none" stroke="#c4c4c4" stroke-width="0.7"/></svg>
<div class="t" style="left:1434.3px;top:306px;font-size:11.5px;color:#c4c4c4;font-family:'Liberation Serif',serif;">T</div>
<div class="t" style="left:1446.0px;top:306px;font-size:7.2px;letter-spacing:0.33px;color:#3aa7cc;">100</div>
<div class="t" style="left:1460.5px;top:306px;font-size:7.2px;letter-spacing:-0.16px;transform:scaleX(0.929);transform-origin:0 50%;color:#9a9a9a;">%</div>
<svg style="left:1474px;top:309.0px;" width="4" height="3" viewBox="0 0 4 3"><path d="M0 0h3.800000l-1.900000 2.600000z" fill="#7a7a7a"/></svg>
<div class="t" style="left:1498.2px;top:304px;font-size:11px;color:#d4d4d4;font-weight:bold;font-family:'Liberation Serif',serif;">T</div>
<svg style="left:1497px;top:315px;" width="11" height="3" viewBox="0 0 11 3"><path d="M0.500000 1.500000h10M2 0l-1.500000 1.500000 1.500000 1.500000M9 0l1.500000 1.500000-1.500000 1.500000" fill="none" stroke="#c4c4c4" stroke-width="0.7"/></svg>
<div class="t" style="left:1515.5px;top:306px;font-size:7.2px;letter-spacing:0.33px;color:#3aa7cc;">100</div>
<div class="t" style="left:1530.0px;top:306px;font-size:7.2px;letter-spacing:-0.16px;transform:scaleX(0.881);transform-origin:0 50%;color:#9a9a9a;">%</div>
<svg style="left:1544px;top:309.0px;" width="4" height="3" viewBox="0 0 4 3"><path d="M0 0h3.800000l-1.900000 2.600000z" fill="#7a7a7a"/></svg>
<div class="t" style="left:1431.0px;top:319px;font-size:9px;color:#c4c4c4;font-family:'Liberation Serif',serif;">A</div>
<svg style="left:1431px;top:320px;" width="10" height="10" viewBox="0 0 10 10"><path d="M0 8.800000h6" stroke="#c4c4c4" stroke-width="0.7"/><path d="M8.200000 1.500000v7M7 3l1.200000-1.500000 1.200000 1.500000M7 7l1.200000 1.500000 1.200000-1.500000" fill="none" stroke="#c4c4c4" stroke-width="0.7"/></svg>
<div class="t" style="left:1446.0px;top:320px;font-size:7.2px;color:#3aa7cc;">0</div>
<div class="t" style="left:1452.0px;top:320px;font-size:7.2px;letter-spacing:0.20px;color:#9a9a9a;">px</div>
<svg style="left:1474px;top:322.6px;" width="4" height="3" viewBox="0 0 4 3"><path d="M0 0h3.800000l-1.900000 2.600000z" fill="#7a7a7a"/></svg>
<svg style="left:1498px;top:319px;" width="10" height="10" viewBox="0 0 10 10"><path d="M1 4.500000h8" stroke="#9a9a9a" stroke-width="0.7" stroke-dasharray="1 0.800000"/><path d="M1 8.500000h2.500000M6.500000 8.500000h2.500000M2.500000 7.500000l1 1-1 1M7.500000 7.500000l-1 1 1 1" fill="none" stroke="#c4c4c4" stroke-width="0.7"/></svg>
<svg style="left:1500px;top:319.5px;" width="6" height="6" viewBox="0 0 6 6"><path d="M0.500000 1.500000h5M3 0v5.500000M1 3.500000a2 1.500000 0 1 0 4 0a2 1.500000 0 1 0-4 0" fill="none" stroke="#9a9a9a" stroke-width="0.7"/></svg>
<div class="t" style="left:1515.5px;top:320px;font-size:7.2px;color:#3aa7cc;">0</div>
<div class="t" style="left:1521.5px;top:320px;font-size:7.2px;letter-spacing:-0.16px;transform:scaleX(0.801);transform-origin:0 50%;color:#9a9a9a;">%</div>
<svg style="left:1544px;top:322.6px;" width="4" height="3" viewBox="0 0 4 3"><path d="M0 0h3.800000l-1.900000 2.600000z" fill="#7a7a7a"/></svg>
<div class="a" style="left:1431px;top:334px;width:121px;height:1px;background:#303030;"></div>
<div class="t" style="left:1447.0px;top:340px;font-size:10.5px;color:#d4d4d4;font-weight:bold;font-family:'Liberation Serif',serif;">T</div>
<div class="t" style="left:1462.5px;top:340px;font-size:10.5px;color:#d4d4d4;font-style:italic;font-family:'Liberation Serif',serif;">T</div>
<div class="t" style="left:1478.0px;top:340px;font-size:10px;color:#d4d4d4;font-family:'Liberation Serif',serif;letter-spacing:-0.300000px;">TT</div>
<div class="t" style="left:1494.5px;top:340px;font-size:10px;color:#d4d4d4;font-family:'Liberation Serif',serif;">T</div>
<div class="t" style="left:1500.0px;top:341px;font-size:7.5px;color:#d4d4d4;font-family:'Liberation Serif',serif;">T</div>
<div class="t" style="left:1513.5px;top:340px;font-size:10px;color:#d4d4d4;font-family:'Liberation Serif',serif;">T</div>
<div class="t" style="left:1520.0px;top:337px;font-size:5px;color:#d4d4d4;font-family:'Liberation Serif',serif;">1</div>
<div class="t" style="left:1529.5px;top:340px;font-size:10px;color:#d4d4d4;font-family:'Liberation Serif',serif;">T</div>
<div class="t" style="left:1536.0px;top:343px;font-size:5px;color:#d4d4d4;font-family:'Liberation Serif',serif;">1</div>
<div class="a" style="left:1453.8px;top:548px;width:124.2px;height:301px;background:#29292b;"></div>
<div class="a" style="left:1453.8px;top:548px;width:57px;height:17.3px;background:#171f1c;"></div>
<div class="a" style="left:1552px;top:548px;width:26px;height:17.3px;background:#171f1c;"></div>
<div class="t" style="left:1460.6px;top:552px;font-size:7.6px;letter-spacing:-0.17px;transform:scaleX(0.971);transform-origin:0 50%;color:#7c7c7c;">Paragraph</div>
<div class="t" style="left:1518.4px;top:552px;font-size:7.6px;letter-spacing:-0.17px;transform:scaleX(0.936);transform-origin:0 50%;color:#d8d8d8;font-weight:bold;">Align</div>
<svg style="left:1543px;top:554px;" width="5" height="6" viewBox="0 0 5 6"><path d="M0 0.500000h4M0 2.500000h4M0 4.500000h4" stroke="#8a8a8a" stroke-width="0.9"/></svg>
<div class="t" style="left:1456.8px;top:568px;font-size:7.4px;letter-spacing:-0.02px;color:#b4b4b4;">Align Layers to:</div>
<div class="a" style="left:1511px;top:567px;width:67px;height:12px;background:#1d2322;"></div>
<div class="t" style="left:1515.0px;top:568px;font-size:7.4px;letter-spacing:0.03px;color:#d8d8d8;">Composition</div>
<svg style="left:1570px;top:571px;" width="6" height="4" viewBox="0 0 6 4"><path d="M0.200000 0.300000h5.600000l-2.800000 3.300000z" fill="#e0e0e0"/></svg>
<svg style="left:1460.5px;top:582.9px;" width="9" height="9" viewBox="0 0 9 9"><path d="M0.500000 0v9" stroke="#c4c4c4" stroke-width="1"/><rect x="1.800000" y="1.300000" width="4" height="2.600000" fill="#c4c4c4"/><rect x="1.800000" y="5.200000" width="6.500000" height="2.600000" fill="#c4c4c4"/></svg>
<svg style="left:1481.5px;top:582.9px;" width="9" height="9" viewBox="0 0 9 9"><path d="M4.500000 0v9" stroke="#c4c4c4" stroke-width="0.8"/><rect x="2.500000" y="1.300000" width="4" height="2.600000" fill="#c4c4c4"/><rect x="1.200000" y="5.200000" width="6.600000" height="2.600000" fill="#c4c4c4"/></svg>
<svg style="left:1503.0px;top:582.9px;" width="9" height="9" viewBox="0 0 9 9"><path d="M8.500000 0v9" stroke="#c4c4c4" stroke-width="1"/><rect x="3.200000" y="1.300000" width="4" height="2.600000" fill="#c4c4c4"/><rect x="0.700000" y="5.200000" width="6.500000" height="2.600000" fill="#c4c4c4"/></svg>
<svg style="left:1524.1px;top:582.9px;" width="9" height="9" viewBox="0 0 9 9"><path d="M0 0.500000h9" stroke="#c4c4c4" stroke-width="1"/><rect x="1.300000" y="1.800000" width="2.600000" height="6.500000" fill="#c4c4c4"/><rect x="5.200000" y="1.800000" width="2.600000" height="4" fill="#c4c4c4"/></svg>
<svg style="left:1544.9px;top:582.9px;" width="9" height="9" viewBox="0 0 9 9"><path d="M0 4.500000h9" stroke="#c4c4c4" stroke-width="0.8"/><rect x="1.300000" y="1.200000" width="2.600000" height="6.600000" fill="#c4c4c4"/><rect x="5.200000" y="2.500000" width="2.600000" height="4" fill="#c4c4c4"/></svg>
<svg style="left:1565.9px;top:582.9px;" width="9" height="9" viewBox="0 0 9 9"><path d="M0 8.500000h9" stroke="#c4c4c4" stroke-width="1"/><rect x="1.300000" y="0.700000" width="2.600000" height="6.500000" fill="#c4c4c4"/><rect x="5.200000" y="3.200000" width="2.600000" height="4" fill="#c4c4c4"/></svg>
<div class="t" style="left:1456.8px;top:598px;font-size:7.4px;letter-spacing:0.01px;color:#b4b4b4;">Distribute Layers:</div>
<svg style="left:1460.5px;top:609.8px;" width="9" height="9" viewBox="0 0 9 9"><path d="M0 0.500000h9" stroke="#5a5a5a" stroke-width="1"/><rect x="1.300000" y="1.800000" width="2.600000" height="6.500000" fill="#5a5a5a"/><rect x="5.200000" y="1.800000" width="2.600000" height="4" fill="#5a5a5a"/></svg>
<svg style="left:1481.5px;top:609.8px;" width="9" height="9" viewBox="0 0 9 9"><path d="M0 4.500000h9" stroke="#5a5a5a" stroke-width="0.8"/><rect x="1.300000" y="1.200000" width="2.600000" height="6.600000" fill="#5a5a5a"/><rect x="5.200000" y="2.500000" width="2.600000" height="4" fill="#5a5a5a"/></svg>
<svg style="left:1503.0px;top:609.8px;" width="9" height="9" viewBox="0 0 9 9"><path d="M0 8.500000h9" stroke="#5a5a5a" stroke-width="1"/><rect x="1.300000" y="0.700000" width="2.600000" height="6.500000" fill="#5a5a5a"/><rect x="5.200000" y="3.200000" width="2.600000" height="4" fill="#5a5a5a"/></svg>
<svg style="left:1524.1px;top:609.8px;" width="9" height="9" viewBox="0 0 9 9"><path d="M0.500000 0v9" stroke="#5a5a5a" stroke-width="1"/><rect x="1.800000" y="1.300000" width="4" height="2.600000" fill="#5a5a5a"/><rect x="1.800000" y="5.200000" width="6.500000" height="2.600000" fill="#5a5a5a"/></svg>
<svg style="left:1544.9px;top:609.8px;" width="9" height="9" viewBox="0 0 9 9"><path d="M4.500000 0v9" stroke="#5a5a5a" stroke-width="0.8"/><rect x="2.500000" y="1.300000" width="4" height="2.600000" fill="#5a5a5a"/><rect x="1.200000" y="5.200000" width="6.600000" height="2.600000" fill="#5a5a5a"/></svg>
<svg style="left:1565.9px;top:609.8px;" width="9" height="9" viewBox="0 0 9 9"><path d="M8.500000 0v9" stroke="#5a5a5a" stroke-width="1"/><rect x="3.200000" y="1.300000" width="4" height="2.600000" fill="#5a5a5a"/><rect x="0.700000" y="5.200000" width="6.500000" height="2.600000" fill="#5a5a5a"/></svg>
<!-- p_timeline -->
<div class="a" style="left:0px;top:548px;width:1451px;height:301px;background:#28292c;"></div>
<div class="a" style="left:0px;top:548px;width:1451px;height:17px;background:#19211f;"></div>
<div class="t" style="left:16.5px;top:552px;font-size:7.6px;letter-spacing:-0.17px;transform:scaleX(0.963);transform-origin:0 50%;color:#7c7c7c;">Render Queue</div>
<div class="a" style="left:96.4px;top:553.3px;width:6.7px;height:6.5px;background:#b5a084;"></div>
<div class="t" style="left:109.5px;top:552px;font-size:7.6px;letter-spacing:-0.17px;transform:scaleX(0.981);transform-origin:0 50%;color:#7c7c7c;">Main</div>
<div class="a" style="left:159px;top:553.3px;width:6.7px;height:6.5px;background:#b5a084;"></div>
<div class="t" style="left:172.0px;top:552px;font-size:7.6px;letter-spacing:-0.17px;transform:scaleX(0.954);transform-origin:0 50%;color:#7c7c7c;">HUD ELement</div>
<div class="a" style="left:235px;top:548px;width:59px;height:18px;background:#28292c;border:1px solid #28707e;border-bottom:none;box-sizing:border-box;"></div>
<div class="a" style="left:0px;top:564.6px;width:235.5px;height:1px;background:#28707e;"></div>
<div class="a" style="left:293.5px;top:564.6px;width:1157.5px;height:1px;background:#28707e;"></div>
<div class="a" style="left:1450px;top:565px;width:1px;height:284px;background:#3f7f8c;"></div>
<div class="a" style="left:0px;top:565px;width:1px;height:284px;background:#23454c;"></div>
<svg style="left:241px;top:554.5px;" width="5" height="5" viewBox="0 0 5 5"><path d="M0.500000 0.500000l3.400000 3.400000M3.900000 0.500000l-3.400000 3.400000" stroke="#9a9a9a" stroke-width="0.9"/></svg>
<div class="a" style="left:250.2px;top:553.3px;width:6.8px;height:6.5px;background:#b5a084;"></div>
<div class="t" style="left:263.5px;top:552px;font-size:7.8px;letter-spacing:-0.17px;transform:scaleX(0.874);transform-origin:0 50%;color:#dcdcdc;font-weight:bold;">TUT</div>
<svg style="left:283px;top:554px;" width="5" height="6" viewBox="0 0 5 6"><path d="M0 0.500000h4M0 2.500000h4M0 4.500000h4" stroke="#8a8a8a" stroke-width="0.9"/></svg>
<div class="a" style="left:0px;top:565.6px;width:388px;height:21.4px;background:#232325;"></div>
<div class="t" style="left:10.0px;top:567px;font-size:10.6px;letter-spacing:-0.23px;transform:scaleX(0.989);transform-origin:0 50%;color:#45b4d2;font-weight:bold;">0:00:02:12</div>
<div class="t" style="left:6.3px;top:577px;font-size:7.4px;letter-spacing:-0.16px;transform:scaleX(0.985);transform-origin:0 50%;color:#3ba3c4;">00060 (23.976 fps)</div>
<div class="a" style="left:70px;top:569.5px;width:193px;height:12px;background:#1a211f;"></div>
<svg style="left:74.5px;top:571px;" width="12" height="9" viewBox="0 0 12 9"><circle cx="4.600000" cy="3.200000" r="2.500000" fill="none" stroke="#a5a5a5" stroke-width="0.9"/><path d="M2.900000 5.200000l-2.400000 2.800000" stroke="#a5a5a5" stroke-width="1"/><path d="M8 5.500000h3l-1.500000 1.600000z" fill="#a5a5a5"/></svg>
<svg style="left:272px;top:571.3px;" width="11" height="9" viewBox="0 0 11 9"><path d="M0.500000 2h8M5 4.500000h4.500000M7.500000 2v5" fill="none" stroke="#c0c0c0" stroke-width="1.1"/><circle cx="3" cy="2" r="1" fill="#c0c0c0"/><rect x="6.800000" y="6.500000" width="1.500000" height="1.500000" fill="#c0c0c0"/></svg>
<svg style="left:293px;top:569.8px;" width="11" height="11" viewBox="0 0 11 11"><path d="M5 4l3.500000-1.300000 2.500000 1.500000v3.500000l-3.200000 1.800000-2.800000-1.500000z" fill="#777" stroke="#b0b0b0" stroke-width="0.8"/><path d="M5 4l2.800000 1.500000 3.200000-1.300000M7.800000 5.500000v4" fill="none" stroke="#b0b0b0" stroke-width="0.7"/><path d="M2.200000 0v4.400000M0 2.200000h4.400000M0.600000 0.600000l3.200000 3.200000M3.800000 0.600000l-3.200000 3.200000" stroke="#b0b0b0" stroke-width="0.7"/></svg>
<svg style="left:314px;top:570.8px;" width="11" height="10" viewBox="0 0 11 10"><path d="M0.500000 9.500000v-3.500000a5 5 0 0 1 10 0v3.500000z" fill="#7a7a7a"/><path d="M5.500000 2.500000v5M3.500000 4.500000l2-2 2 2" fill="none" stroke="#d0d0d0" stroke-width="1"/></svg>
<svg style="left:331px;top:570.3px;" width="10" height="11" viewBox="0 0 10 11"><rect x="3.500000" y="0.500000" width="5.500000" height="8" fill="#7a7a7a" stroke="#a0a0a0" stroke-width="0.6"/><rect x="0.500000" y="3.500000" width="4" height="7" fill="#8a8a8a" stroke="#b0b0b0" stroke-width="0.6"/><path d="M4.500000 2.500000h3M4.500000 4.500000h3M4.500000 6.500000h3" stroke="#bbb" stroke-width="0.6"/></svg>
<svg style="left:347px;top:570.8px;" width="11" height="10" viewBox="0 0 11 10"><g transform="rotate(-35 5.500000 5)"><rect x="1" y="2.500000" width="9" height="5" rx="2.500000" fill="#8a8a8a"/><circle cx="3.500000" cy="5" r="2.500000" fill="#b5b5b5"/></g></svg>
<svg style="left:367.5px;top:570.8px;" width="11" height="10" viewBox="0 0 11 10"><rect x="0.500000" y="2" width="9.500000" height="7.500000" fill="#8a8a8a"/><path d="M1.500000 2l1.500000-1.800000M5 2l1.500000-1.800000M8.500000 2l1.500000-1.800000" stroke="#b0b0b0" stroke-width="1"/><path d="M2 7.500000l3-3 1.500000 1.500000 2-2" fill="none" stroke="#333" stroke-width="0.8"/></svg>
<div class="a" style="left:0px;top:587px;width:388px;height:1px;background:#0e0e0e;"></div>
<div class="a" style="left:0px;top:588px;width:388px;height:10.5px;background:#29292b;"></div>
<div class="a" style="left:0px;top:598.3px;width:388px;height:0.8px;background:#151515;"></div>
<svg style="left:3px;top:590.5px;" width="8" height="6" viewBox="0 0 8 6"><path d="M0.300000 3c1.800000-3.600000 5.600000-3.600000 7.400000 0-1.800000 3.600000-5.600000 3.600000-7.400000 0z" fill="#3a3a3a" stroke="#a0a0a0" stroke-width="0.9"/><circle cx="4" cy="2.800000" r="1.500000" fill="#1c1c1c" stroke="#a0a0a0" stroke-width="0.500000"/></svg>
<svg style="left:12.5px;top:590px;" width="8" height="7" viewBox="0 0 8 7"><path d="M0 2.300000h1.800000l2.400000-2.200000v6.800000l-2.400000-2.200000h-1.800000z" fill="#a0a0a0"/><path d="M5.300000 2a2 2 0 0 1 0 3M6.300000 1a3.500000 3.500000 0 0 1 0 5" fill="none" stroke="#a0a0a0" stroke-width="0.6"/></svg>
<div class="a" style="left:23px;top:591.5px;width:4.2px;height:4.2px;background:#a8a8a8;border-radius:50%;"></div>
<svg style="left:31.5px;top:589.5px;" width="6" height="8" viewBox="0 0 6 8"><rect x="0.300000" y="3.300000" width="5.200000" height="4.200000" fill="#a8a8a8"/><path d="M1.300000 3.300000v-1.300000a1.600000 1.600000 0 0 1 3.200000 0v1.300000" fill="none" stroke="#a8a8a8" stroke-width="0.9"/><rect x="2.300000" y="4.600000" width="1.200000" height="1.600000" fill="#262626"/></svg>
<div class="a" style="left:42.5px;top:589.5px;width:1px;height:8px;background:#1c1c1c;"></div>
<svg style="left:51.5px;top:589px;" width="9" height="9" viewBox="0 0 9 9"><path d="M4.800000 0.500000h3.400000v3.400000l-4.600000 4.600000-3.200000-3.200000z" fill="#b4b4b4"/><circle cx="6.600000" cy="2.100000" r="0.700000" fill="#262626"/></svg>
<div class="t" style="left:65.5px;top:589px;font-size:7px;color:#5e5e5e;">#</div>
<div class="a" style="left:81.5px;top:589.5px;width:1px;height:8px;background:#1c1c1c;"></div>
<div class="t" style="left:85.7px;top:589px;font-size:6.8px;letter-spacing:-0.15px;transform:scaleX(0.881);transform-origin:0 50%;color:#666;">Layer Name</div>
<svg style="left:225.0px;top:590.3px;" width="7" height="7" viewBox="0 0 7 7"><path d="M0.300000 3.300000a3.200000 3 0 0 1 6.400000 0l-1.200000 0.500000h-4z" fill="#a8a8a8"/><path d="M1.800000 3.800000l-0.300000 2.400000M3.500000 3.800000v2.700000M5.200000 3.800000l0.300000 2.400000" stroke="#a8a8a8" stroke-width="1"/></svg>
<svg style="left:234.5px;top:589.5px;" width="8" height="8" viewBox="0 0 8 8"><circle cx="4" cy="4" r="1.500000" fill="none" stroke="#a8a8a8" stroke-width="0.8"/><path d="M4 0.300000v1.500000M4 6.200000v1.500000M0.300000 4h1.500000M6.200000 4h1.500000M1.400000 1.400000l1 1M5.600000 5.600000l1 1M6.600000 1.400000l-1 1M2.400000 5.600000l-1 1" stroke="#a8a8a8" stroke-width="0.7"/></svg>
<svg style="left:243.5px;top:589.5px;" width="8" height="8" viewBox="0 0 8 8"><path d="M0.500000 0.500000l7 7" stroke="#8a8a8a" stroke-width="0.8"/></svg>
<div class="t" style="left:252.3px;top:588px;font-size:8.5px;color:#a8a8a8;font-weight:bold;font-style:italic;font-family:'Liberation Serif',serif;">fx</div>
<svg style="left:261.5px;top:589.5px;" width="8" height="8" viewBox="0 0 8 8"><rect x="0.500000" y="0.500000" width="7" height="7" fill="#777" stroke="#a8a8a8" stroke-width="0.8"/><path d="M2.500000 0.500000v7M2.500000 3h5M2.500000 5.500000h5" stroke="#ccc" stroke-width="0.6"/></svg>
<svg style="left:270.5px;top:589.5px;" width="9" height="8" viewBox="0 0 9 8"><g transform="rotate(-35 4.500000 4)"><rect x="0.500000" y="1.800000" width="8" height="4.400000" rx="2.200000" fill="none" stroke="#a8a8a8" stroke-width="0.9"/><path d="M3.500000 1.800000v4.400000" stroke="#a8a8a8" stroke-width="0.7"/></g></svg>
<svg style="left:279.5px;top:589.5px;" width="8" height="8" viewBox="0 0 8 8"><circle cx="4" cy="4" r="3.600000" fill="#f0f0f0"/><path d="M1.450000 6.550000a3.600000 3.600000 0 0 1 5.100000-5.100000z" fill="#111"/></svg>
<svg style="left:289px;top:589.5px;" width="9" height="8" viewBox="0 0 9 8"><path d="M4.500000 0.300000l3.700000 1.800000v3.800000l-3.700000 1.800000-3.700000-1.800000v-3.800000z" fill="none" stroke="#a8a8a8" stroke-width="0.8"/><path d="M0.800000 2.100000l3.700000 1.800000 3.700000-1.800000M4.500000 3.900000v3.800000" fill="none" stroke="#a8a8a8" stroke-width="0.7"/></svg>
<div class="a" style="left:304px;top:589.5px;width:1px;height:8px;background:#1c1c1c;"></div>
<div class="t" style="left:309.5px;top:589px;font-size:6.8px;letter-spacing:-0.15px;transform:scaleX(0.878);transform-origin:0 50%;color:#5a5a5a;">Parent</div>
<div class="a" style="left:378px;top:589.5px;width:1px;height:8px;background:#1c1c1c;"></div>
<div class="a" style="left:0px;top:609.4px;width:388px;height:73.5px;background:#222325;"></div>
<div class="a" style="left:0px;top:724.9px;width:388px;height:10.5px;background:#212224;"></div>
<div class="a" style="left:0px;top:598.9px;width:388px;height:10.1px;background:#3c3c3e;"></div>
<svg style="left:3px;top:601.3px;" width="8" height="6" viewBox="0 0 8 6"><path d="M0.300000 3c1.800000-3.600000 5.600000-3.600000 7.400000 0-1.800000 3.600000-5.600000 3.600000-7.400000 0z" fill="#3a3a3a" stroke="#a8a8a8" stroke-width="0.9"/><circle cx="4" cy="2.800000" r="1.500000" fill="#1c1c1c" stroke="#a8a8a8" stroke-width="0.500000"/></svg>
<div class="a" style="left:21px;top:599.9px;width:8px;height:8.2px;background:#161b19;"></div>
<div class="a" style="left:30.7px;top:599.9px;width:8px;height:8.2px;background:#161b19;"></div>
<svg style="left:45px;top:601.6px;" width="6" height="5" viewBox="0 0 6 5"><path d="M0.200000 0.300000h5.200000l-2.600000 4.400000z" fill="#d0d0d0"/></svg>
<div class="a" style="left:52.3px;top:599.9px;width:8px;height:8.2px;background:#6d6fd2;"></div>
<div class="t" style="left:66.0px;top:600px;font-size:8px;color:#b8b8b8;font-weight:bold;">1</div>
<svg style="left:85.3px;top:601.1px;" width="6" height="6" viewBox="0 0 6 6"><path d="M3 0l0.900000 1.900000 2.100000 0.300000-1.500000 1.500000 0.400000 2.100000-1.900000-1-1.900000 1 0.400000-2.100000-1.500000-1.500000 2.100000-0.300000z" fill="#e0e0e0"/></svg>
<div class="a" style="left:93.5px;top:599.2px;width:128px;height:9.8px;background:#555;border:1px solid #9a9a9a;box-sizing:border-box;"></div>
<div class="t" style="left:95.7px;top:600px;font-size:8.2px;letter-spacing:-0.18px;transform:scaleX(0.941);transform-origin:0 50%;color:#a6a6a6;">Shape Layer 1</div>
<div class="a" style="left:223.5px;top:599.7px;width:8.4px;height:8.6px;background:#171d1a;"></div>
<div class="a" style="left:232.5px;top:599.7px;width:8.4px;height:8.6px;background:#171d1a;"></div>
<div class="a" style="left:241.5px;top:599.7px;width:8.4px;height:8.6px;background:#171d1a;"></div>
<svg style="left:224.8px;top:600.9px;" width="7" height="7" viewBox="0 0 7 7"><path d="M0.300000 3.300000a3.200000 3 0 0 1 6.400000 0l-1.200000 0.500000h-4z" fill="#b0b0b0"/><path d="M1.800000 3.800000l-0.300000 2.400000M3.500000 3.800000v2.700000M5.200000 3.800000l0.300000 2.400000" stroke="#b0b0b0" stroke-width="1"/></svg>
<svg style="left:233px;top:600.1px;" width="8" height="8" viewBox="0 0 8 8"><circle cx="4" cy="4" r="1.500000" fill="none" stroke="#6a6a6a" stroke-width="0.8"/><path d="M4 0.300000v1.500000M4 6.200000v1.500000M0.300000 4h1.500000M6.200000 4h1.500000M1.400000 1.400000l1 1M5.600000 5.600000l1 1M6.600000 1.400000l-1 1M2.400000 5.600000l-1 1" stroke="#6a6a6a" stroke-width="0.7"/></svg>
<svg style="left:242.5px;top:600.1px;" width="8" height="8" viewBox="0 0 8 8"><path d="M0.500000 7.500000l7-7" stroke="#c8c8c8" stroke-width="1.1"/></svg>
<div class="a" style="left:270px;top:599.9px;width:8px;height:8.2px;background:#161b19;"></div>
<div class="a" style="left:279.5px;top:599.9px;width:8px;height:8.2px;background:#161b19;"></div>
<div class="a" style="left:289px;top:599.9px;width:8px;height:8.2px;background:#161b19;"></div>
<svg style="left:308.5px;top:600.3px;" width="8" height="8" viewBox="0 0 8 8"><circle cx="4" cy="4" r="2.800000" fill="none" stroke="#9a9a9a" stroke-width="0.9"/><path d="M4 4a1.300000 1.300000 0 1 1 1.300000 1.300000" fill="none" stroke="#9a9a9a" stroke-width="0.8"/></svg>
<div class="a" style="left:320px;top:599.5px;width:56px;height:9.5px;background:#1b2220;"></div>
<div class="t" style="left:323.7px;top:600px;font-size:7.6px;letter-spacing:-0.17px;transform:scaleX(1.000);transform-origin:0 50%;color:#d8d8d8;">None</div>
<svg style="left:367.5px;top:602px;" width="6" height="4" viewBox="0 0 6 4"><path d="M0.200000 0.300000h5.200000l-2.600000 3z" fill="#e0e0e0"/></svg>
<div class="a" style="left:0px;top:619.5px;width:388px;height:0.5px;background:#1b1b1b;"></div>
<svg style="left:55.5px;top:612.1px;" width="6" height="5" viewBox="0 0 6 5"><path d="M0.200000 0.300000h5.200000l-2.600000 4.400000z" fill="#cfcfcf"/></svg>
<div class="t" style="left:65.9px;top:610px;font-size:8px;letter-spacing:-0.18px;transform:scaleX(0.951);transform-origin:0 50%;color:#9c9c9c;">Contents</div>
<div class="t" style="left:278.0px;top:610px;font-size:8px;letter-spacing:-0.18px;transform:scaleX(0.952);transform-origin:0 50%;color:#9c9c9c;">Add:</div>
<svg style="left:296.5px;top:611px;" width="7" height="7" viewBox="0 0 7 7"><circle cx="3.500000" cy="3.500000" r="3.200000" fill="#c9c9c9"/><path d="M2.700000 1.800000l2.500000 1.700000-2.500000 1.700000z" fill="#222"/></svg>
<div class="a" style="left:0px;top:630.0px;width:388px;height:0.5px;background:#1b1b1b;"></div>
<svg style="left:3px;top:622.3px;" width="8" height="6" viewBox="0 0 8 6"><path d="M0.300000 3c1.800000-3.600000 5.600000-3.600000 7.400000 0-1.800000 3.600000-5.600000 3.600000-7.400000 0z" fill="#3a3a3a" stroke="#9a9a9a" stroke-width="0.9"/><circle cx="4" cy="2.800000" r="1.500000" fill="#1c1c1c" stroke="#9a9a9a" stroke-width="0.500000"/></svg>
<svg style="left:66px;top:622.6px;" width="6" height="5" viewBox="0 0 6 5"><path d="M0.200000 0.300000h5.200000l-2.600000 4.400000z" fill="#cfcfcf"/></svg>
<div class="t" style="left:76.0px;top:621px;font-size:8px;letter-spacing:-0.18px;transform:scaleX(0.932);transform-origin:0 50%;color:#9c9c9c;">Rectangle 1</div>
<div class="a" style="left:0px;top:640.5px;width:388px;height:0.5px;background:#1b1b1b;"></div>
<svg style="left:3px;top:632.8px;" width="8" height="6" viewBox="0 0 8 6"><path d="M0.300000 3c1.800000-3.600000 5.600000-3.600000 7.400000 0-1.800000 3.600000-5.600000 3.600000-7.400000 0z" fill="#3a3a3a" stroke="#9a9a9a" stroke-width="0.9"/><circle cx="4" cy="2.800000" r="1.500000" fill="#1c1c1c" stroke="#9a9a9a" stroke-width="0.500000"/></svg>
<svg style="left:77px;top:632.8px;" width="5" height="6" viewBox="0 0 5 6"><path d="M0.300000 0.200000v5.200000l4.400000-2.600000z" fill="#cfcfcf"/></svg>
<div class="t" style="left:86.7px;top:631px;font-size:8px;letter-spacing:-0.18px;transform:scaleX(0.927);transform-origin:0 50%;color:#9c9c9c;">Rectangle Path 1</div>
<div class="a" style="left:0px;top:651.0px;width:388px;height:0.5px;background:#1b1b1b;"></div>
<svg style="left:3px;top:643.3px;" width="8" height="6" viewBox="0 0 8 6"><path d="M0.300000 3c1.800000-3.600000 5.600000-3.600000 7.400000 0-1.800000 3.600000-5.600000 3.600000-7.400000 0z" fill="#3a3a3a" stroke="#9a9a9a" stroke-width="0.9"/><circle cx="4" cy="2.800000" r="1.500000" fill="#1c1c1c" stroke="#9a9a9a" stroke-width="0.500000"/></svg>
<svg style="left:77px;top:643.3px;" width="5" height="6" viewBox="0 0 5 6"><path d="M0.300000 0.200000v5.200000l4.400000-2.600000z" fill="#cfcfcf"/></svg>
<div class="t" style="left:86.7px;top:642px;font-size:8px;letter-spacing:-0.18px;transform:scaleX(0.951);transform-origin:0 50%;color:#9c9c9c;">Stroke 1</div>
<div class="a" style="left:0px;top:661.5px;width:388px;height:0.5px;background:#1b1b1b;"></div>
<svg style="left:3px;top:653.8px;" width="8" height="6" viewBox="0 0 8 6"><path d="M0.300000 3c1.800000-3.600000 5.600000-3.600000 7.400000 0-1.800000 3.600000-5.600000 3.600000-7.400000 0z" fill="#3a3a3a" stroke="#9a9a9a" stroke-width="0.9"/><circle cx="4" cy="2.800000" r="1.500000" fill="#1c1c1c" stroke="#9a9a9a" stroke-width="0.500000"/></svg>
<svg style="left:77px;top:653.8px;" width="5" height="6" viewBox="0 0 5 6"><path d="M0.300000 0.200000v5.200000l4.400000-2.600000z" fill="#cfcfcf"/></svg>
<div class="t" style="left:86.7px;top:652px;font-size:8px;letter-spacing:-0.18px;transform:scaleX(0.966);transform-origin:0 50%;color:#9c9c9c;">Fill 1</div>
<div class="a" style="left:0px;top:672.0px;width:388px;height:0.5px;background:#1b1b1b;"></div>
<svg style="left:77px;top:664.3px;" width="5" height="6" viewBox="0 0 5 6"><path d="M0.300000 0.200000v5.200000l4.400000-2.600000z" fill="#cfcfcf"/></svg>
<div class="t" style="left:86.7px;top:663px;font-size:8px;letter-spacing:-0.18px;transform:scaleX(0.961);transform-origin:0 50%;color:#9c9c9c;">Transform: Rectangle 1</div>
<div class="a" style="left:0px;top:682.5px;width:388px;height:0.5px;background:#1b1b1b;"></div>
<svg style="left:55.5px;top:674.8px;" width="5" height="6" viewBox="0 0 5 6"><path d="M0.300000 0.200000v5.200000l4.400000-2.600000z" fill="#cfcfcf"/></svg>
<div class="t" style="left:65.9px;top:673px;font-size:8px;letter-spacing:-0.18px;transform:scaleX(0.986);transform-origin:0 50%;color:#9c9c9c;">Transform</div>
<div class="a" style="left:224px;top:620.3px;width:71px;height:9.4px;background:#1a201e;"></div>
<div class="a" style="left:224px;top:641.3px;width:71px;height:9.4px;background:#1a201e;"></div>
<div class="a" style="left:224px;top:651.8px;width:71px;height:9.4px;background:#1a201e;"></div>
<div class="t" style="left:228.3px;top:621px;font-size:7.6px;letter-spacing:-0.17px;transform:scaleX(0.941);transform-origin:0 50%;color:#d0d0d0;font-weight:bold;">Normal</div>
<div class="t" style="left:228.3px;top:642px;font-size:7.6px;letter-spacing:-0.17px;transform:scaleX(0.941);transform-origin:0 50%;color:#d0d0d0;font-weight:bold;">Normal</div>
<div class="t" style="left:228.3px;top:652px;font-size:7.6px;letter-spacing:-0.17px;transform:scaleX(0.941);transform-origin:0 50%;color:#d0d0d0;font-weight:bold;">Normal</div>
<div class="a" style="left:224px;top:630.9px;width:10.5px;height:9.5px;background:#050807;"></div>
<svg style="left:226px;top:632.4px;" width="7" height="7" viewBox="0 0 7 7"><path d="M0.500000 1.800000h5.500000M1 5.200000h5.500000M4.500000 0.500000l1.500000 1.300000-1.500000 1.300000M2.500000 4l-1.500000 1.200000 1.500000 1.300000" fill="none" stroke="#d8d8d8" stroke-width="0.8"/></svg>
<svg style="left:237px;top:632.4px;" width="7" height="7" viewBox="0 0 7 7"><path d="M0.500000 1.800000h5.500000M1 5.200000h5.500000" fill="none" stroke="#4a4a4a" stroke-width="0.8"/></svg>
<div class="t" style="left:224.0px;top:673px;font-size:7.4px;letter-spacing:-0.16px;transform:scaleX(0.905);transform-origin:0 50%;color:#2f9cc4;font-weight:bold;">Reset</div>
<div class="a" style="left:0px;top:682.9px;width:388px;height:10.1px;background:#2c2c2e;"></div>
<svg style="left:3px;top:685.3px;" width="8" height="6" viewBox="0 0 8 6"><path d="M0.300000 3c1.800000-3.600000 5.600000-3.600000 7.400000 0-1.800000 3.600000-5.600000 3.600000-7.400000 0z" fill="#3a3a3a" stroke="#a8a8a8" stroke-width="0.9"/><circle cx="4" cy="2.800000" r="1.500000" fill="#1c1c1c" stroke="#a8a8a8" stroke-width="0.500000"/></svg>
<div class="a" style="left:21px;top:683.9px;width:8px;height:8.2px;background:#161b19;"></div>
<div class="a" style="left:30.7px;top:683.9px;width:8px;height:8.2px;background:#161b19;"></div>
<svg style="left:45.2px;top:685.3px;" width="5" height="6" viewBox="0 0 5 6"><path d="M0.300000 0.200000v5.200000l4.400000-2.600000z" fill="#d0d0d0"/></svg>
<div class="a" style="left:52.3px;top:683.9px;width:8px;height:8.2px;background:#6d6fd2;"></div>
<div class="t" style="left:66.0px;top:684px;font-size:8px;color:#8e8e8e;">2</div>
<svg style="left:85.3px;top:685.1px;" width="6" height="6" viewBox="0 0 6 6"><path d="M3 0l0.900000 1.900000 2.100000 0.300000-1.500000 1.500000 0.400000 2.100000-1.900000-1-1.900000 1 0.400000-2.100000-1.500000-1.500000 2.100000-0.300000z" fill="#e0e0e0"/></svg>
<div class="t" style="left:95.5px;top:684px;font-size:8px;letter-spacing:-0.06px;color:#b2b2b2;text-shadow:0 0 0.500000px #b2b2b2;">Outline 2</div>
<div class="a" style="left:223.5px;top:683.7px;width:8.4px;height:8.6px;background:#171d1a;"></div>
<div class="a" style="left:232.5px;top:683.7px;width:8.4px;height:8.6px;background:#171d1a;"></div>
<div class="a" style="left:241.5px;top:683.7px;width:8.4px;height:8.6px;background:#171d1a;"></div>
<svg style="left:224.8px;top:684.9px;" width="7" height="7" viewBox="0 0 7 7"><path d="M0.300000 3.300000a3.200000 3 0 0 1 6.400000 0l-1.200000 0.500000h-4z" fill="#b0b0b0"/><path d="M1.800000 3.800000l-0.300000 2.400000M3.500000 3.800000v2.700000M5.200000 3.800000l0.300000 2.400000" stroke="#b0b0b0" stroke-width="1"/></svg>
<svg style="left:233px;top:684.1px;" width="8" height="8" viewBox="0 0 8 8"><circle cx="4" cy="4" r="1.500000" fill="none" stroke="#6a6a6a" stroke-width="0.8"/><path d="M4 0.300000v1.500000M4 6.200000v1.500000M0.300000 4h1.500000M6.200000 4h1.500000M1.400000 1.400000l1 1M5.600000 5.600000l1 1M6.600000 1.400000l-1 1M2.400000 5.600000l-1 1" stroke="#6a6a6a" stroke-width="0.7"/></svg>
<svg style="left:242.5px;top:684.1px;" width="8" height="8" viewBox="0 0 8 8"><path d="M0.500000 7.500000l7-7" stroke="#c8c8c8" stroke-width="1.1"/></svg>
<div class="a" style="left:270px;top:683.9px;width:8px;height:8.2px;background:#161b19;"></div>
<div class="a" style="left:279.5px;top:683.9px;width:8px;height:8.2px;background:#161b19;"></div>
<div class="a" style="left:289px;top:683.9px;width:8px;height:8.2px;background:#161b19;"></div>
<div class="a" style="left:0px;top:693.4px;width:388px;height:10.1px;background:#2c2c2e;"></div>
<svg style="left:3px;top:695.8px;" width="8" height="6" viewBox="0 0 8 6"><path d="M0.300000 3c1.800000-3.600000 5.600000-3.600000 7.400000 0-1.800000 3.600000-5.600000 3.600000-7.400000 0z" fill="#3a3a3a" stroke="#a8a8a8" stroke-width="0.9"/><circle cx="4" cy="2.800000" r="1.500000" fill="#1c1c1c" stroke="#a8a8a8" stroke-width="0.500000"/></svg>
<div class="a" style="left:21px;top:694.4px;width:8px;height:8.2px;background:#161b19;"></div>
<div class="a" style="left:30.7px;top:694.4px;width:8px;height:8.2px;background:#161b19;"></div>
<svg style="left:45.2px;top:695.8px;" width="5" height="6" viewBox="0 0 5 6"><path d="M0.300000 0.200000v5.200000l4.400000-2.600000z" fill="#d0d0d0"/></svg>
<div class="a" style="left:52.3px;top:694.4px;width:8px;height:8.2px;background:#6d6fd2;"></div>
<div class="t" style="left:66.0px;top:694px;font-size:8px;color:#8e8e8e;">3</div>
<svg style="left:85.3px;top:695.6px;" width="6" height="6" viewBox="0 0 6 6"><path d="M3 0l0.900000 1.900000 2.100000 0.300000-1.500000 1.500000 0.400000 2.100000-1.900000-1-1.900000 1 0.400000-2.100000-1.500000-1.500000 2.100000-0.300000z" fill="#e0e0e0"/></svg>
<div class="t" style="left:95.5px;top:694px;font-size:8px;letter-spacing:-0.09px;color:#b2b2b2;text-shadow:0 0 0.500000px #b2b2b2;">Thick Line 2</div>
<div class="a" style="left:223.5px;top:694.2px;width:8.4px;height:8.6px;background:#171d1a;"></div>
<div class="a" style="left:232.5px;top:694.2px;width:8.4px;height:8.6px;background:#171d1a;"></div>
<div class="a" style="left:241.5px;top:694.2px;width:8.4px;height:8.6px;background:#171d1a;"></div>
<svg style="left:224.8px;top:695.4px;" width="7" height="7" viewBox="0 0 7 7"><path d="M0.300000 3.300000a3.200000 3 0 0 1 6.400000 0l-1.200000 0.500000h-4z" fill="#b0b0b0"/><path d="M1.800000 3.800000l-0.300000 2.400000M3.500000 3.800000v2.700000M5.200000 3.800000l0.300000 2.400000" stroke="#b0b0b0" stroke-width="1"/></svg>
<svg style="left:233px;top:694.6px;" width="8" height="8" viewBox="0 0 8 8"><circle cx="4" cy="4" r="1.500000" fill="none" stroke="#6a6a6a" stroke-width="0.8"/><path d="M4 0.300000v1.500000M4 6.200000v1.500000M0.300000 4h1.500000M6.200000 4h1.500000M1.400000 1.400000l1 1M5.600000 5.600000l1 1M6.600000 1.400000l-1 1M2.400000 5.600000l-1 1" stroke="#6a6a6a" stroke-width="0.7"/></svg>
<svg style="left:242.5px;top:694.6px;" width="8" height="8" viewBox="0 0 8 8"><path d="M0.500000 7.500000l7-7" stroke="#c8c8c8" stroke-width="1.1"/></svg>
<div class="a" style="left:270px;top:694.4px;width:8px;height:8.2px;background:#161b19;"></div>
<div class="a" style="left:279.5px;top:694.4px;width:8px;height:8.2px;background:#161b19;"></div>
<div class="a" style="left:289px;top:694.4px;width:8px;height:8.2px;background:#161b19;"></div>
<div class="a" style="left:0px;top:703.9px;width:388px;height:10.1px;background:#2c2c2e;"></div>
<svg style="left:3px;top:706.3px;" width="8" height="6" viewBox="0 0 8 6"><path d="M0.300000 3c1.800000-3.600000 5.600000-3.600000 7.400000 0-1.800000 3.600000-5.600000 3.600000-7.400000 0z" fill="#3a3a3a" stroke="#a8a8a8" stroke-width="0.9"/><circle cx="4" cy="2.800000" r="1.500000" fill="#1c1c1c" stroke="#a8a8a8" stroke-width="0.500000"/></svg>
<div class="a" style="left:21px;top:704.9px;width:8px;height:8.2px;background:#161b19;"></div>
<div class="a" style="left:30.7px;top:704.9px;width:8px;height:8.2px;background:#161b19;"></div>
<svg style="left:45.2px;top:706.3px;" width="5" height="6" viewBox="0 0 5 6"><path d="M0.300000 0.200000v5.200000l4.400000-2.600000z" fill="#d0d0d0"/></svg>
<div class="a" style="left:52.3px;top:704.9px;width:8px;height:8.2px;background:#6d6fd2;"></div>
<div class="t" style="left:66.0px;top:705px;font-size:8px;color:#8e8e8e;">4</div>
<svg style="left:85.3px;top:706.1px;" width="6" height="6" viewBox="0 0 6 6"><path d="M3 0l0.900000 1.900000 2.100000 0.300000-1.500000 1.500000 0.400000 2.100000-1.900000-1-1.900000 1 0.400000-2.100000-1.500000-1.500000 2.100000-0.300000z" fill="#e0e0e0"/></svg>
<div class="t" style="left:95.5px;top:705px;font-size:8px;letter-spacing:-0.05px;color:#b2b2b2;text-shadow:0 0 0.500000px #b2b2b2;">Thick Line</div>
<div class="a" style="left:223.5px;top:704.7px;width:8.4px;height:8.6px;background:#171d1a;"></div>
<div class="a" style="left:232.5px;top:704.7px;width:8.4px;height:8.6px;background:#171d1a;"></div>
<div class="a" style="left:241.5px;top:704.7px;width:8.4px;height:8.6px;background:#171d1a;"></div>
<svg style="left:224.8px;top:705.9px;" width="7" height="7" viewBox="0 0 7 7"><path d="M0.300000 3.300000a3.200000 3 0 0 1 6.400000 0l-1.200000 0.500000h-4z" fill="#b0b0b0"/><path d="M1.800000 3.800000l-0.300000 2.400000M3.500000 3.800000v2.700000M5.200000 3.800000l0.300000 2.400000" stroke="#b0b0b0" stroke-width="1"/></svg>
<svg style="left:233px;top:705.1px;" width="8" height="8" viewBox="0 0 8 8"><circle cx="4" cy="4" r="1.500000" fill="none" stroke="#6a6a6a" stroke-width="0.8"/><path d="M4 0.300000v1.500000M4 6.200000v1.500000M0.300000 4h1.500000M6.200000 4h1.500000M1.400000 1.400000l1 1M5.600000 5.600000l1 1M6.600000 1.400000l-1 1M2.400000 5.600000l-1 1" stroke="#6a6a6a" stroke-width="0.7"/></svg>
<svg style="left:242.5px;top:705.1px;" width="8" height="8" viewBox="0 0 8 8"><path d="M0.500000 7.500000l7-7" stroke="#c8c8c8" stroke-width="1.1"/></svg>
<div class="a" style="left:270px;top:704.9px;width:8px;height:8.2px;background:#161b19;"></div>
<div class="a" style="left:279.5px;top:704.9px;width:8px;height:8.2px;background:#161b19;"></div>
<div class="a" style="left:289px;top:704.9px;width:8px;height:8.2px;background:#161b19;"></div>
<div class="a" style="left:0px;top:714.4px;width:388px;height:10.1px;background:#2c2c2e;"></div>
<svg style="left:3px;top:716.8px;" width="8" height="6" viewBox="0 0 8 6"><path d="M0.300000 3c1.800000-3.600000 5.600000-3.600000 7.400000 0-1.800000 3.600000-5.600000 3.600000-7.400000 0z" fill="#3a3a3a" stroke="#a8a8a8" stroke-width="0.9"/><circle cx="4" cy="2.800000" r="1.500000" fill="#1c1c1c" stroke="#a8a8a8" stroke-width="0.500000"/></svg>
<div class="a" style="left:21px;top:715.4px;width:8px;height:8.2px;background:#161b19;"></div>
<div class="a" style="left:30.7px;top:715.4px;width:8px;height:8.2px;background:#161b19;"></div>
<svg style="left:45px;top:717.1px;" width="6" height="5" viewBox="0 0 6 5"><path d="M0.200000 0.300000h5.200000l-2.600000 4.400000z" fill="#d0d0d0"/></svg>
<div class="a" style="left:52.3px;top:715.4px;width:8px;height:8.2px;background:#6d6fd2;"></div>
<div class="t" style="left:66.0px;top:715px;font-size:8px;color:#8e8e8e;">5</div>
<svg style="left:85.3px;top:716.6px;" width="6" height="6" viewBox="0 0 6 6"><path d="M3 0l0.900000 1.900000 2.100000 0.300000-1.500000 1.500000 0.400000 2.100000-1.900000-1-1.900000 1 0.400000-2.100000-1.500000-1.500000 2.100000-0.300000z" fill="#e0e0e0"/></svg>
<div class="t" style="left:95.5px;top:715px;font-size:8px;letter-spacing:0.02px;color:#b2b2b2;text-shadow:0 0 0.500000px #b2b2b2;">Outline</div>
<div class="a" style="left:223.5px;top:715.2px;width:8.4px;height:8.6px;background:#171d1a;"></div>
<div class="a" style="left:232.5px;top:715.2px;width:8.4px;height:8.6px;background:#171d1a;"></div>
<div class="a" style="left:241.5px;top:715.2px;width:8.4px;height:8.6px;background:#171d1a;"></div>
<svg style="left:224.8px;top:716.4px;" width="7" height="7" viewBox="0 0 7 7"><path d="M0.300000 3.300000a3.200000 3 0 0 1 6.400000 0l-1.200000 0.500000h-4z" fill="#b0b0b0"/><path d="M1.800000 3.800000l-0.300000 2.400000M3.500000 3.800000v2.700000M5.200000 3.800000l0.300000 2.400000" stroke="#b0b0b0" stroke-width="1"/></svg>
<svg style="left:233px;top:715.6px;" width="8" height="8" viewBox="0 0 8 8"><circle cx="4" cy="4" r="1.500000" fill="none" stroke="#6a6a6a" stroke-width="0.8"/><path d="M4 0.300000v1.500000M4 6.200000v1.500000M0.300000 4h1.500000M6.200000 4h1.500000M1.400000 1.400000l1 1M5.600000 5.600000l1 1M6.600000 1.400000l-1 1M2.400000 5.600000l-1 1" stroke="#6a6a6a" stroke-width="0.7"/></svg>
<svg style="left:242.5px;top:715.6px;" width="8" height="8" viewBox="0 0 8 8"><path d="M0.500000 7.500000l7-7" stroke="#c8c8c8" stroke-width="1.1"/></svg>
<div class="a" style="left:270px;top:715.4px;width:8px;height:8.2px;background:#161b19;"></div>
<div class="a" style="left:279.5px;top:715.4px;width:8px;height:8.2px;background:#161b19;"></div>
<div class="a" style="left:289px;top:715.4px;width:8px;height:8.2px;background:#161b19;"></div>
<div class="a" style="left:0px;top:735.0px;width:388px;height:0.5px;background:#1b1b1b;"></div>
<svg style="left:74.5px;top:725.6px;" width="8" height="9" viewBox="0 0 8 9"><circle cx="4" cy="5" r="3" fill="none" stroke="#b0b0b0" stroke-width="1"/><path d="M4 5v-2M2.800000 0.500000h2.400000M4 0.500000v1.500000M6.300000 2.300000l0.800000-0.800000" stroke="#b0b0b0" stroke-width="0.8"/></svg>
<div class="t" style="left:86.0px;top:726px;font-size:8px;letter-spacing:-0.18px;transform:scaleX(0.862);transform-origin:0 50%;color:#9c9c9c;">Scale</div>
<svg style="left:224px;top:728.1px;" width="8" height="4" viewBox="0 0 8 4"><rect x="0.400000" y="0.400000" width="4" height="2.800000" rx="1.400000" fill="none" stroke="#b0b0b0" stroke-width="0.8"/><rect x="3.400000" y="0.400000" width="4" height="2.800000" rx="1.400000" fill="none" stroke="#b0b0b0" stroke-width="0.8"/></svg>
<div class="t" style="left:235.5px;top:726px;font-size:7.6px;letter-spacing:-0.03px;color:#35a6cc;font-weight:bold;">100.0,100.0%</div>
<div class="a" style="left:388px;top:565.6px;width:1061.5px;height:283.4px;background:#1c1c1c;"></div>
<div class="a" style="left:388px;top:565.6px;width:1061.5px;height:3.3px;background:#171f1c;"></div>
<div class="a" style="left:392px;top:569px;width:1043px;height:5px;background:#5f5c5c;"></div>
<div class="a" style="left:388.2px;top:569px;width:3.6px;height:5px;background:#3aa6b6;border-radius:2px 0 0 2px;"></div>
<div class="a" style="left:1435.5px;top:569px;width:3.6px;height:5px;background:#3aa6b6;border-radius:0 2px 2px 0;"></div>
<div class="a" style="left:651.8px;top:569.5px;width:4px;height:4px;background:#7a7a7a;"></div>
<div class="a" style="left:388px;top:574px;width:1050.5px;height:12.2px;background:#222223;"></div>
<div class="a" style="left:388.5px;top:574px;width:16px;height:10px;overflow:hidden;"><div class="t" style="left:-1.500000px;top:0;font-size:6.8px;letter-spacing:0.1px;color:#626262;-webkit-text-stroke:0;">0:00f</div></div>
<div class="a" style="left:393.0px;top:583px;width:0.9px;height:3px;background:#747474;"></div>
<div class="t" style="left:435.6px;top:574px;font-size:6.8px;letter-spacing:0.15px;color:#626262;-webkit-text-stroke:0;">00:12f</div>
<div class="a" style="left:445.1px;top:584.5px;width:0.9px;height:1.5px;background:#5a5a5a;"></div>
<div class="t" style="left:487.7px;top:574px;font-size:6.8px;letter-spacing:0.15px;color:#626262;-webkit-text-stroke:0;">01:00f</div>
<div class="a" style="left:497.2px;top:583px;width:0.9px;height:3px;background:#747474;"></div>
<div class="t" style="left:539.8px;top:574px;font-size:6.8px;letter-spacing:0.15px;color:#626262;-webkit-text-stroke:0;">01:12f</div>
<div class="a" style="left:549.3px;top:584.5px;width:0.9px;height:1.5px;background:#5a5a5a;"></div>
<div class="t" style="left:591.8px;top:574px;font-size:6.8px;letter-spacing:0.15px;color:#626262;-webkit-text-stroke:0;">02:00f</div>
<div class="a" style="left:601.3px;top:583px;width:0.9px;height:3px;background:#747474;"></div>
<div class="t" style="left:643.9px;top:574px;font-size:6.8px;letter-spacing:0.15px;color:#626262;-webkit-text-stroke:0;">02:12f</div>
<div class="a" style="left:653.4px;top:584.5px;width:0.9px;height:1.5px;background:#5a5a5a;"></div>
<div class="t" style="left:696.0px;top:574px;font-size:6.8px;letter-spacing:0.15px;color:#626262;-webkit-text-stroke:0;">03:00f</div>
<div class="a" style="left:705.5px;top:583px;width:0.9px;height:3px;background:#747474;"></div>
<div class="t" style="left:748.1px;top:574px;font-size:6.8px;letter-spacing:0.15px;color:#626262;-webkit-text-stroke:0;">03:12f</div>
<div class="a" style="left:757.6px;top:584.5px;width:0.9px;height:1.5px;background:#5a5a5a;"></div>
<div class="t" style="left:800.2px;top:574px;font-size:6.8px;letter-spacing:0.15px;color:#626262;-webkit-text-stroke:0;">04:00f</div>
<div class="a" style="left:809.7px;top:583px;width:0.9px;height:3px;background:#747474;"></div>
<div class="t" style="left:852.3px;top:574px;font-size:6.8px;letter-spacing:0.15px;color:#626262;-webkit-text-stroke:0;">04:12f</div>
<div class="a" style="left:861.8px;top:584.5px;width:0.9px;height:1.5px;background:#5a5a5a;"></div>
<div class="t" style="left:904.4px;top:574px;font-size:6.8px;letter-spacing:0.15px;color:#626262;-webkit-text-stroke:0;">05:00f</div>
<div class="a" style="left:913.9px;top:583px;width:0.9px;height:3px;background:#747474;"></div>
<div class="t" style="left:956.4px;top:574px;font-size:6.8px;letter-spacing:0.15px;color:#626262;-webkit-text-stroke:0;">05:12f</div>
<div class="a" style="left:965.9px;top:584.5px;width:0.9px;height:1.5px;background:#5a5a5a;"></div>
<div class="t" style="left:1008.5px;top:574px;font-size:6.8px;letter-spacing:0.15px;color:#626262;-webkit-text-stroke:0;">06:00f</div>
<div class="a" style="left:1018.0px;top:583px;width:0.9px;height:3px;background:#747474;"></div>
<div class="t" style="left:1060.6px;top:574px;font-size:6.8px;letter-spacing:0.15px;color:#626262;-webkit-text-stroke:0;">06:12f</div>
<div class="a" style="left:1070.1px;top:584.5px;width:0.9px;height:1.5px;background:#5a5a5a;"></div>
<div class="t" style="left:1112.7px;top:574px;font-size:6.8px;letter-spacing:0.15px;color:#626262;-webkit-text-stroke:0;">07:00f</div>
<div class="a" style="left:1122.2px;top:583px;width:0.9px;height:3px;background:#747474;"></div>
<div class="t" style="left:1164.8px;top:574px;font-size:6.8px;letter-spacing:0.15px;color:#626262;-webkit-text-stroke:0;">07:12f</div>
<div class="a" style="left:1174.3px;top:584.5px;width:0.9px;height:1.5px;background:#5a5a5a;"></div>
<div class="t" style="left:1216.9px;top:574px;font-size:6.8px;letter-spacing:0.15px;color:#626262;-webkit-text-stroke:0;">08:00f</div>
<div class="a" style="left:1226.4px;top:583px;width:0.9px;height:3px;background:#747474;"></div>
<div class="t" style="left:1269.0px;top:574px;font-size:6.8px;letter-spacing:0.15px;color:#626262;-webkit-text-stroke:0;">08:12f</div>
<div class="a" style="left:1278.5px;top:584.5px;width:0.9px;height:1.5px;background:#5a5a5a;"></div>
<div class="t" style="left:1321.0px;top:574px;font-size:6.8px;letter-spacing:0.15px;color:#626262;-webkit-text-stroke:0;">09:00f</div>
<div class="a" style="left:1330.5px;top:583px;width:0.9px;height:3px;background:#747474;"></div>
<div class="t" style="left:1373.1px;top:574px;font-size:6.8px;letter-spacing:0.15px;color:#626262;-webkit-text-stroke:0;">09:12f</div>
<div class="a" style="left:1382.6px;top:584.5px;width:0.9px;height:1.5px;background:#5a5a5a;"></div>
<div class="t" style="left:1425.0px;top:574px;font-size:6.8px;letter-spacing:-0.01px;color:#626262;-webkit-text-stroke:0;">10:0</div>
<div class="a" style="left:1434.7px;top:583px;width:0.9px;height:3px;background:#747474;"></div>
<div class="a" style="left:388px;top:586.2px;width:1062px;height:1px;background:#060606;"></div>
<div class="a" style="left:392px;top:587.2px;width:1043px;height:8.8px;background:linear-gradient(#625f5f,#585555);"></div>
<div class="a" style="left:388.2px;top:588px;width:3.6px;height:8px;background:#3aa6b6;"></div>
<div class="a" style="left:1435.5px;top:588px;width:3.6px;height:8px;background:#3aa6b6;"></div>
<div class="a" style="left:388px;top:596px;width:1062px;height:2.7px;background:#111;"></div>
<div class="a" style="left:388px;top:598.7px;width:1050.5px;height:250.3px;background:#302e2e;"></div>
<div class="a" style="left:388px;top:598.7px;width:4px;height:250.3px;background:#1e1e1e;"></div>
<div class="a" style="left:392px;top:609.0px;width:1046.5px;height:0.7px;background:#222;"></div>
<div class="a" style="left:392px;top:619.5px;width:1046.5px;height:0.7px;background:#222;"></div>
<div class="a" style="left:392px;top:630.0px;width:1046.5px;height:0.7px;background:#222;"></div>
<div class="a" style="left:392px;top:640.5px;width:1046.5px;height:0.7px;background:#222;"></div>
<div class="a" style="left:392px;top:651.0px;width:1046.5px;height:0.7px;background:#222;"></div>
<div class="a" style="left:392px;top:661.5px;width:1046.5px;height:0.7px;background:#222;"></div>
<div class="a" style="left:392px;top:672.0px;width:1046.5px;height:0.7px;background:#222;"></div>
<div class="a" style="left:392px;top:682.5px;width:1046.5px;height:0.7px;background:#222;"></div>
<div class="a" style="left:392px;top:693.0px;width:1046.5px;height:0.7px;background:#222;"></div>
<div class="a" style="left:392px;top:703.5px;width:1046.5px;height:0.7px;background:#222;"></div>
<div class="a" style="left:392px;top:714.0px;width:1046.5px;height:0.7px;background:#222;"></div>
<div class="a" style="left:392px;top:724.5px;width:1046.5px;height:0.7px;background:#222;"></div>
<div class="a" style="left:392px;top:735.0px;width:1046.5px;height:0.7px;background:#222;"></div>
<div class="a" style="left:392px;top:735.6px;width:1046.5px;height:113.4px;background:#2b2a2a;"></div>
<div class="a" style="left:1435.3px;top:598.7px;width:3.7px;height:250.3px;background:#262626;"></div>
<div class="a" style="left:392.2px;top:599.2px;width:1043.1px;height:10.1px;background:linear-gradient(#7c7edc,#6668cc 35%,#5c5ec4);"></div>
<div class="a" style="left:392.2px;top:683.1px;width:1043.1px;height:9.9px;background:#4b4d83;"></div>
<div class="a" style="left:392.2px;top:693.0px;width:1043.1px;height:0.6px;background:#33345c;"></div>
<div class="a" style="left:392.2px;top:693.6px;width:1043.1px;height:9.9px;background:#4b4d83;"></div>
<div class="a" style="left:392.2px;top:703.5px;width:1043.1px;height:0.6px;background:#33345c;"></div>
<div class="a" style="left:392.2px;top:704.1px;width:1043.1px;height:9.9px;background:#4b4d83;"></div>
<div class="a" style="left:392.2px;top:714.0px;width:1043.1px;height:0.6px;background:#33345c;"></div>
<div class="a" style="left:392.2px;top:714.6px;width:1043.1px;height:9.9px;background:#4b4d83;"></div>
<div class="a" style="left:1439px;top:565.6px;width:11px;height:283.4px;background:#0f1613;"></div>
<svg style="left:1440.5px;top:588.5px;" width="8" height="9" viewBox="0 0 8 9"><path d="M0.500000 0.500000h7v5l-3.500000 3-3.500000-3z" fill="#6a6a6a"/></svg>
<svg style="left:1440px;top:600px;" width="9" height="9" viewBox="0 0 9 9"><circle cx="4" cy="3.500000" r="3" fill="#b0b0b0"/><path d="M0.500000 8.500000a3.500000 3.500000 0 0 1 7 0z" fill="#b0b0b0"/><rect x="4.500000" y="4.500000" width="4" height="3.500000" fill="#ddd" stroke="#333" stroke-width="0.5"/></svg>
<div class="a" style="left:653.3px;top:576px;width:1px;height:273px;background:#4fa3bd;"></div>
<svg style="left:649.8px;top:576.5px;" width="8" height="10" viewBox="0 0 8 10"><path d="M0.300000 0.500000h7.400000v3.500000l-3.700000 5.500000-3.700000-5.500000z" fill="#3db9dc"/><path d="M2.500000 2h3v2l-1.500000 2-1.500000-2z" fill="#1a5a70"/></svg>
<div class="a" style="left:652.8px;top:597px;width:5.5px;height:1px;background:#3fc04a;"></div>
<svg style="left:651.8px;top:611.1px;" width="4" height="7" viewBox="0 0 4 7"><path d="M0.300000 0.500000h3.400000M0.300000 6.500000h3.400000M2 0.500000v6" stroke="#b8c4c8" stroke-width="1"/></svg>
<svg style="left:651.8px;top:621.6px;" width="4" height="7" viewBox="0 0 4 7"><path d="M0.300000 0.500000h3.400000M0.300000 6.500000h3.400000M2 0.500000v6" stroke="#b8c4c8" stroke-width="1"/></svg>
<svg style="left:651.8px;top:632.1px;" width="4" height="7" viewBox="0 0 4 7"><path d="M0.300000 0.500000h3.400000M0.300000 6.500000h3.400000M2 0.500000v6" stroke="#b8c4c8" stroke-width="1"/></svg>
<svg style="left:651.8px;top:642.6px;" width="4" height="7" viewBox="0 0 4 7"><path d="M0.300000 0.500000h3.400000M0.300000 6.500000h3.400000M2 0.500000v6" stroke="#b8c4c8" stroke-width="1"/></svg>
<svg style="left:651.8px;top:653.1px;" width="4" height="7" viewBox="0 0 4 7"><path d="M0.300000 0.500000h3.400000M0.300000 6.500000h3.400000M2 0.500000v6" stroke="#b8c4c8" stroke-width="1"/></svg>
<svg style="left:651.8px;top:663.6px;" width="4" height="7" viewBox="0 0 4 7"><path d="M0.300000 0.500000h3.400000M0.300000 6.500000h3.400000M2 0.500000v6" stroke="#b8c4c8" stroke-width="1"/></svg>
<svg style="left:651.8px;top:674.1px;" width="4" height="7" viewBox="0 0 4 7"><path d="M0.300000 0.500000h3.400000M0.300000 6.500000h3.400000M2 0.500000v6" stroke="#b8c4c8" stroke-width="1"/></svg>
<svg style="left:651.8px;top:726.6px;" width="4" height="7" viewBox="0 0 4 7"><path d="M0.300000 0.500000h3.400000M0.300000 6.500000h3.400000M2 0.500000v6" stroke="#b8c4c8" stroke-width="1"/></svg>
<!-- p_menu -->
<div class="a" style="left:295.3px;top:613px;width:96px;height:240px;background:#bfbfbf;border-radius:0 4.500000px 0 0;box-shadow:0 1px 5px rgba(0,0,0,0.55);"></div>
<div class="a" style="left:295.3px;top:631.1px;width:96px;height:1px;background:#a9a9a9;"></div>
<div class="a" style="left:295.3px;top:684.7px;width:96px;height:1px;background:#a9a9a9;"></div>
<div class="a" style="left:295.3px;top:739.2px;width:96px;height:1px;background:#a9a9a9;"></div>
<div class="a" style="left:295.3px;top:779px;width:96px;height:11.8px;background:#2160cf;"></div>
<div class="t" style="left:308.5px;top:617px;font-size:8.9px;letter-spacing:-0.03px;color:#1e1e1e;text-shadow:0 0 0.300000px currentColor;">Group (empty)</div>
<div class="t" style="left:308.5px;top:636px;font-size:8.9px;letter-spacing:-0.06px;color:#1e1e1e;text-shadow:0 0 0.300000px currentColor;">Rectangle</div>
<div class="t" style="left:308.5px;top:647px;font-size:8.9px;letter-spacing:-0.10px;color:#2e2e2e;text-shadow:0 0 0.300000px currentColor;">Ellipse</div>
<div class="t" style="left:308.5px;top:659px;font-size:8.9px;letter-spacing:-0.08px;color:#1e1e1e;text-shadow:0 0 0.300000px currentColor;">Polystar</div>
<div class="t" style="left:308.5px;top:671px;font-size:8.9px;letter-spacing:-0.20px;transform:scaleX(0.970);transform-origin:0 50%;color:#1e1e1e;text-shadow:0 0 0.300000px currentColor;">Path</div>
<div class="t" style="left:308.5px;top:690px;font-size:8.9px;letter-spacing:-0.20px;transform:scaleX(0.992);transform-origin:0 50%;color:#3a3a3a;text-shadow:0 0 0.300000px currentColor;">Fill</div>
<div class="t" style="left:308.5px;top:702px;font-size:8.9px;letter-spacing:-0.04px;color:#1e1e1e;text-shadow:0 0 0.300000px currentColor;">Stroke</div>
<div class="t" style="left:308.5px;top:714px;font-size:8.9px;letter-spacing:-0.08px;color:#1e1e1e;text-shadow:0 0 0.300000px currentColor;">Gradient Fill</div>
<div class="t" style="left:308.5px;top:725px;font-size:8.9px;letter-spacing:-0.02px;color:#1e1e1e;text-shadow:0 0 0.300000px currentColor;">Gradient Stroke</div>
<div class="t" style="left:308.5px;top:745px;font-size:8.9px;letter-spacing:-0.09px;color:#1e1e1e;text-shadow:0 0 0.300000px currentColor;">Merge Paths</div>
<div class="t" style="left:308.5px;top:756px;font-size:8.9px;letter-spacing:0.02px;color:#1e1e1e;text-shadow:0 0 0.300000px currentColor;">Offset Paths</div>
<div class="t" style="left:308.5px;top:768px;font-size:8.9px;letter-spacing:-0.06px;color:#1e1e1e;text-shadow:0 0 0.300000px currentColor;">Pucker &amp; Bloat</div>
<div class="t" style="left:308.5px;top:780px;font-size:8.9px;letter-spacing:0.05px;color:#ffffff;text-shadow:0 0 0.300000px currentColor;">Repeater</div>
<div class="t" style="left:308.5px;top:791px;font-size:8.9px;letter-spacing:-0.10px;color:#1e1e1e;text-shadow:0 0 0.300000px currentColor;">Round Corners</div>
<div class="t" style="left:308.5px;top:803px;font-size:8.9px;letter-spacing:-0.07px;color:#1e1e1e;text-shadow:0 0 0.300000px currentColor;">Trim Paths</div>
<div class="t" style="left:308.5px;top:815px;font-size:8.9px;letter-spacing:-0.05px;color:#1e1e1e;text-shadow:0 0 0.300000px currentColor;">Twist</div>
<div class="t" style="left:308.5px;top:827px;font-size:8.9px;letter-spacing:-0.04px;color:#1e1e1e;text-shadow:0 0 0.300000px currentColor;">Wiggle Paths</div>
<div class="t" style="left:308.5px;top:838px;font-size:8.9px;letter-spacing:0.02px;color:#1e1e1e;text-shadow:0 0 0.300000px currentColor;">Wiggle Transform</div>
<svg style="left:343.7px;top:782.8px;" width="8" height="12" viewBox="0 0 8 12"><path d="M0.500000 0.500000v9l2.100000-2 1.500000 3.300000 1.400000-0.600000-1.500000-3.200000h2.900000z" fill="#111" stroke="#fff" stroke-width="0.8" stroke-linejoin="round"/></svg>
<!-- p_overlay -->
<div class="a" style="left:0px;top:640px;width:1578px;height:209px;background:linear-gradient(rgba(0,0,0,0) 0%,rgba(0,0,0,0.05) 30%,rgba(0,0,0,0.13) 65%,rgba(0,0,0,0.24) 100%);"></div>
<div class="a" style="left:0px;top:847.2px;width:1578px;height:0.8px;background:#1c1c1c;"></div>
<div class="a" style="left:0px;top:848px;width:1578px;height:1px;background:#b2b2b2;"></div>
<div class="a" style="left:0px;top:847.6px;width:547.2px;height:1.4px;background:#e2351d;"></div>
</div>
</body>
</html>
